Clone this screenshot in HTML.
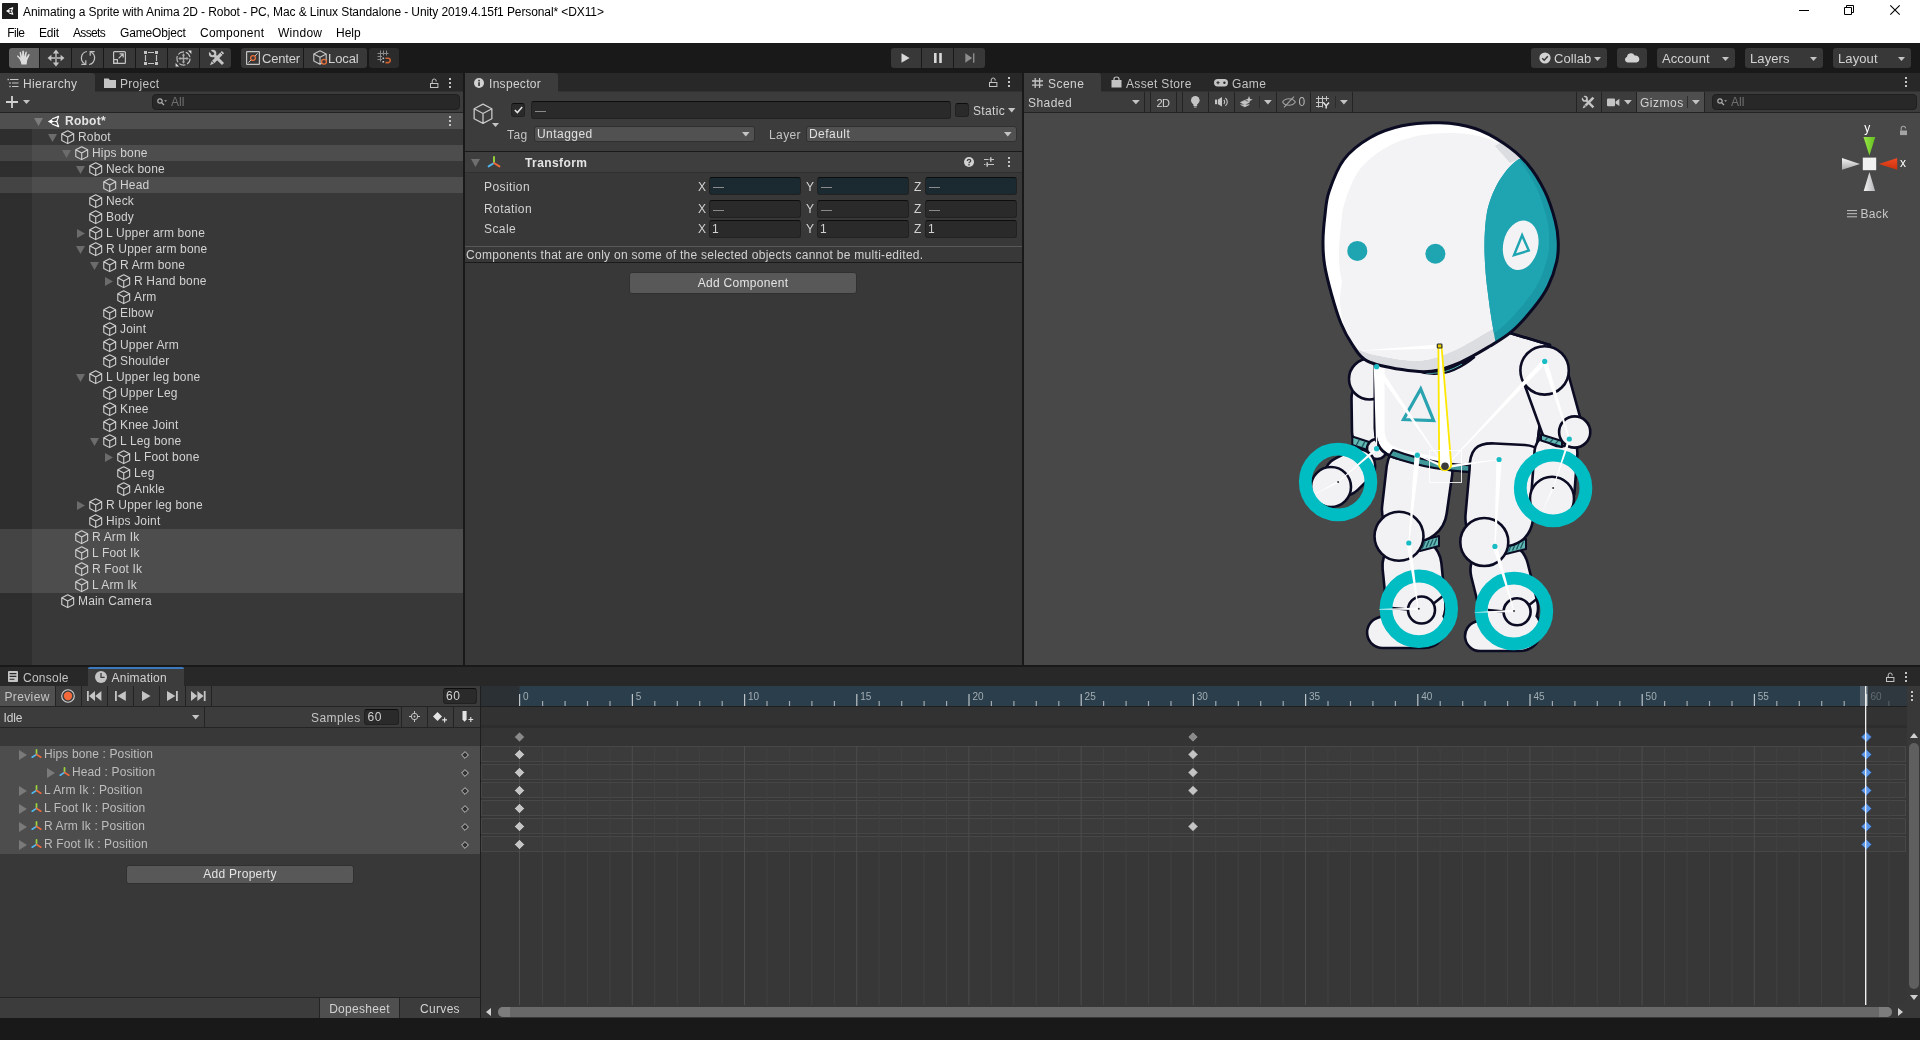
<!DOCTYPE html><html><head><meta charset="utf-8"><title>Unity</title><style>
*{box-sizing:border-box;margin:0;padding:0}
html,body{width:1920px;height:1040px;overflow:hidden;background:#191919;}
body{font-family:"Liberation Sans",sans-serif;font-size:12px;color:#c8c8c8;position:relative;line-height:16px;-webkit-font-smoothing:antialiased}
.a{position:absolute}
.t{position:absolute;white-space:nowrap;line-height:16px;height:16px}
.fld{position:absolute;background:#2a2a2a;border:1px solid #212121;border-top-color:#0d0d0d;border-radius:3px}
.btn{position:absolute;background:#585858;border:1px solid #303030;border-radius:3px;color:#e4e4e4;text-align:center}
.dd{position:absolute;background:#515151;border:1px solid #303030;border-radius:3px}
.sep{position:absolute;background:#232323;width:1px}
.tb{position:absolute;background:#383838;border-radius:2px}
svg{position:absolute;overflow:visible}
</style></head><body><div id="root" style="position:absolute;left:0;top:0;width:1920px;height:1040px;will-change:transform">
<div class="a" style="left:0px;top:0px;width:1920px;height:43px;background:#ffffff;"></div>
<svg style="left:2px;top:3px;" width="16" height="16" viewBox="0 0 16 16"><rect width="16" height="16" rx="0.5" fill="#1c1c1c"/><g transform="translate(2.6,2.8) scale(0.65)"><path d="M2.2 8L7 5V7L9.4 8L7 9V11Z" fill="#fff"/><path d="M7 5L12.6 3L10.8 8L12.6 13L7 11M9.4 8H10.8" fill="none" stroke="#fff" stroke-width="1.6" stroke-linejoin="round"/></g></svg>
<div class="t" style="left:23px;top:4px;color:#000;font-size:12px;letter-spacing:-0.1px">Animating a Sprite with Anima 2D - Robot - PC, Mac &amp; Linux Standalone - Unity 2019.4.15f1 Personal* &lt;DX11&gt;</div>
<div class="t" style="left:7.3px;top:25px;color:#000;font-size:12px;letter-spacing:-0.545px;">File</div>
<div class="t" style="left:39px;top:25px;color:#000;font-size:12px;letter-spacing:-0.226px;">Edit</div>
<div class="t" style="left:73px;top:25px;color:#000;font-size:12px;letter-spacing:-0.642px;">Assets</div>
<div class="t" style="left:120px;top:25px;color:#000;font-size:12px;letter-spacing:-0.173px;">GameObject</div>
<div class="t" style="left:200px;top:25px;color:#000;font-size:12px;letter-spacing:0.245px;">Component</div>
<div class="t" style="left:278px;top:25px;color:#000;font-size:12px;letter-spacing:0.264px;">Window</div>
<div class="t" style="left:336px;top:25px;color:#000;font-size:12px;letter-spacing:0.007px;">Help</div>
<svg style="left:1799px;top:10px;" width="10" height="1" viewBox="0 0 10 1"><rect width="10" height="1" fill="#000"/></svg>
<svg style="left:1844px;top:5px;" width="10" height="10" viewBox="0 0 10 10"><path d="M0.5 2.5H7.5V9.5H0.5Z M2.5 2.5V0.5H9.5V7.5H7.5" fill="none" stroke="#000" stroke-width="1"/></svg>
<svg style="left:1890px;top:5px;" width="10" height="10" viewBox="0 0 10 10"><path d="M0.3 0.3L9.7 9.7M9.7 0.3L0.3 9.7" stroke="#000" stroke-width="1.1"/></svg>
<div class="a" style="left:0px;top:43px;width:1920px;height:30px;background:#191919;"></div>
<div class="a" style="left:9px;top:48px;width:30px;height:20px;background:#656565;border-radius:3px 0 0 3px"></div>
<div class="a" style="left:40px;top:48px;width:31px;height:20px;background:#383838;border-radius:0"></div>
<div class="a" style="left:72px;top:48px;width:31px;height:20px;background:#383838;border-radius:0"></div>
<div class="a" style="left:104px;top:48px;width:31px;height:20px;background:#383838;border-radius:0"></div>
<div class="a" style="left:136px;top:48px;width:31px;height:20px;background:#383838;border-radius:0"></div>
<div class="a" style="left:168px;top:48px;width:31px;height:20px;background:#383838;border-radius:0"></div>
<div class="a" style="left:200px;top:48px;width:31px;height:20px;background:#383838;border-radius:0 3px 3px 0"></div>
<svg style="left:16px;top:50px;" width="16" height="16" viewBox="0 0 16 16"><path d="M3.6 9.2L1.2 6.6C0.6 5.9 1.5 5.1 2.2 5.7L4.4 7.8L3.6 2.6C3.5 1.6 4.8 1.4 5 2.4L6 6.6L6.3 1.3C6.4 0.3 7.8 0.3 7.9 1.3L8.2 6.6L9.4 2.2C9.7 1.2 11 1.5 10.8 2.5L10 7.4L12.3 4.4C12.9 3.6 14 4.4 13.5 5.2L11.2 10.2L10.6 14.4H5.4L4.9 12Z" fill="#dcdcdc"/></svg>
<svg style="left:47px;top:49px;" width="18" height="18" viewBox="0 0 18 18"><path d="M9 2V16M2 9H16" stroke="#a0a0a0" stroke-width="1.8"/><path d="M9 0.6L12.2 4.4H5.8Z M9 17.4L12.2 13.6H5.8Z M0.6 9L4.4 5.8V12.2Z M17.4 9L13.6 5.8V12.2Z" fill="#c4c4c4"/></svg>
<svg style="left:80px;top:50px;" width="16" height="16" viewBox="0 0 16 16"><path d="M6.85 1.5A6.6 6.6 0 0 0 4.7 13.7" fill="none" stroke="#c4c4c4" stroke-width="1.2"/><path d="M1.4 14.4H5.8V10.2" fill="none" stroke="#c4c4c4" stroke-width="1.2"/><path d="M9.15 14.5A6.6 6.6 0 0 0 11.3 2.3" fill="none" stroke="#c4c4c4" stroke-width="1.2"/><path d="M14.6 1.6H10.2V5.8" fill="none" stroke="#c4c4c4" stroke-width="1.2"/></svg>
<svg style="left:113px;top:51px;" width="14" height="14" viewBox="0 0 14 14"><rect x="0.6" y="0.6" width="11.8" height="11.8" rx="1" fill="none" stroke="#c4c4c4" stroke-width="1.2"/><rect x="0.6" y="8.6" width="3.8" height="3.8" fill="none" stroke="#c4c4c4" stroke-width="1.2"/><path d="M5.6 7.4L10 3M6.6 2.8H10.2V6.4" fill="none" stroke="#c4c4c4" stroke-width="1.2"/></svg>
<svg style="left:144px;top:51px;" width="15" height="15" viewBox="0 0 15 15"><path d="M4 1.5H10M4 12.5H10M1.5 4V10M12.5 4V10" stroke="#c4c4c4" stroke-width="1.2"/><rect x="0" y="0" width="3" height="3" fill="#c4c4c4"/><rect x="11" y="0" width="3" height="3" fill="#c4c4c4"/><rect x="0" y="11" width="3" height="3" fill="#c4c4c4"/><rect x="11" y="11" width="3" height="3" fill="#c4c4c4"/></svg>
<svg style="left:175px;top:50px;" width="17" height="17" viewBox="0 0 17 17"><circle cx="8.5" cy="8.5" r="6.6" fill="none" stroke="#c4c4c4" stroke-width="1.1" stroke-dasharray="6.5 1.8"/><path d="M8.5 3.2L10.2 5.4H9.2V7.8H11.6V6.8L13.8 8.5L11.6 10.2V9.2H9.2V11.6H10.2L8.5 13.8L6.8 11.6H7.8V9.2H5.4V10.2L3.2 8.5L5.4 6.8V7.8H7.8V5.4H6.8Z" fill="#a9a9a9"/><path d="M13 0.6H16.4V4Z M4 16.4H0.6V13Z" fill="#dcdcdc"/></svg>
<svg style="left:208px;top:49px;" width="17" height="17" viewBox="0 0 17 17"><path d="M6.4 6.4L15 15" stroke="#c4c4c4" stroke-width="3"/><circle cx="4.6" cy="4.6" r="2.7" fill="none" stroke="#c4c4c4" stroke-width="2.1"/><path d="M4.6 4.6L0.8 0.8" stroke="#383838" stroke-width="2.4"/><path d="M15 3.2L5.2 13" stroke="#c4c4c4" stroke-width="3.2"/><path d="M3.6 12.2L6 14.6L2 16.2Z" fill="#c4c4c4"/><path d="M12.4 3.4L14.8 5.8" stroke="#383838" stroke-width="0.9"/></svg>
<div class="a" style="left:241px;top:48px;width:62px;height:20px;background:#383838;border-radius:3px 0 0 3px"></div>
<div class="a" style="left:304px;top:48px;width:63px;height:20px;background:#383838;border-radius:0 3px 3px 0"></div>
<div class="a" style="left:369px;top:48px;width:30px;height:20px;background:#2b2b2b;border-radius:3px"></div>
<svg style="left:246px;top:51px;" width="14" height="14" viewBox="0 0 14 14"><rect x="0.6" y="0.6" width="12.8" height="12.8" rx="0.5" fill="none" stroke="#c4c4c4" stroke-width="1.2"/><path d="M2.4 11.6L11.6 2.4" stroke="#c4c4c4" stroke-width="1"/><circle cx="7" cy="7" r="2.4" fill="#383838" stroke="#e8703a" stroke-width="1.3"/></svg>
<div class="t" style="left:262px;top:51px;color:#d2d2d2;font-size:13px;letter-spacing:-0.2px">Center</div>
<svg style="left:313px;top:50px;" width="15" height="16" viewBox="0 0 15 16"><path d="M7 0.8L13.2 4V11L7 14.2L0.8 11V4Z M0.8 4L7 7.3L13.2 4 M7 7.3V14.2" fill="none" stroke="#c4c4c4" stroke-width="1.15" stroke-linejoin="round"/><circle cx="11" cy="11.8" r="2.4" fill="#383838" stroke="#e8703a" stroke-width="1.3"/></svg>
<div class="t" style="left:328px;top:51px;color:#d2d2d2;font-size:13px;letter-spacing:-0.1px">Local</div>
<svg style="left:377px;top:50px;" width="15" height="16" viewBox="0 0 15 16"><path d="M3.5 0.5V11.5M6.5 0.5V5.5M9.5 0.5V5.5M0.5 3.5H11.5M0.5 6.5H5M0.5 9.5H5" stroke="#8a8a8a" stroke-width="1"/><rect x="5.5" y="7.5" width="1.6" height="1.6" fill="#c4c4c4"/><rect x="5.5" y="11" width="1.6" height="1.6" fill="#c4c4c4"/><path d="M8.5 8.2H11A2.2 2.2 0 0 1 11 12.6H8.5" fill="none" stroke="#d0622f" stroke-width="1.6"/></svg>
<div class="a" style="left:891px;top:48px;width:30px;height:20px;background:#383838;border-radius:3px 0 0 3px"></div>
<div class="a" style="left:922px;top:48px;width:31px;height:20px;background:#383838;"></div>
<div class="a" style="left:954px;top:48px;width:31px;height:20px;background:#383838;border-radius:0 3px 3px 0"></div>
<svg style="left:901px;top:53px;" width="9" height="10" viewBox="0 0 9 10"><path d="M0.5 0.3V9.7L8.6 5Z" fill="#d8d8d8"/></svg>
<svg style="left:934px;top:53px;" width="8" height="10" viewBox="0 0 8 10"><rect x="0" y="0" width="2.6" height="10" fill="#d8d8d8"/><rect x="5.2" y="0" width="2.6" height="10" fill="#d8d8d8"/></svg>
<svg style="left:965px;top:53px;" width="10" height="10" viewBox="0 0 10 10"><path d="M0.3 0.3V9.7L7.2 5Z" fill="#8d8d8d"/><rect x="8" y="0.3" width="1.4" height="9.4" fill="#8d8d8d"/></svg>
<div class="a" style="left:1531px;top:48px;width:76px;height:20px;background:#383838;border-radius:3px"></div>
<svg style="left:1539px;top:52px;" width="12" height="12" viewBox="0 0 12 12"><circle cx="6" cy="6" r="5.6" fill="#d2d2d2"/><path d="M3.2 6.2L5.2 8.2L8.8 4.2" fill="none" stroke="#383838" stroke-width="1.5"/></svg>
<div class="t" style="left:1554px;top:51px;color:#d2d2d2;font-size:13px;letter-spacing:0.1px">Collab</div>
<svg style="left:1594.0px;top:56.5px;" width="7" height="4" viewBox="0 0 7 4"><path d="M0 0H7L3.5 4Z" fill="#c4c4c4"/></svg>
<div class="a" style="left:1617px;top:48px;width:30px;height:20px;background:#383838;border-radius:3px"></div>
<svg style="left:1624px;top:53px;" width="16" height="10" viewBox="0 0 16 10"><path d="M3.4 9.6A3 3 0 0 1 3 3.8A4 4 0 0 1 10.6 2.6A3.4 3.4 0 0 1 12.6 9.6Z" fill="#d2d2d2"/></svg>
<div class="a" style="left:1657px;top:48px;width:78px;height:20px;background:#383838;border-radius:3px"></div>
<div class="t" style="left:1662px;top:51px;color:#d2d2d2;font-size:13px;letter-spacing:0.1px">Account</div>
<svg style="left:1722.0px;top:56.5px;" width="7" height="4" viewBox="0 0 7 4"><path d="M0 0H7L3.5 4Z" fill="#c4c4c4"/></svg>
<div class="a" style="left:1745px;top:48px;width:78px;height:20px;background:#383838;border-radius:3px"></div>
<div class="t" style="left:1750px;top:51px;color:#d2d2d2;font-size:13px;letter-spacing:0.1px">Layers</div>
<svg style="left:1810.0px;top:56.5px;" width="7" height="4" viewBox="0 0 7 4"><path d="M0 0H7L3.5 4Z" fill="#c4c4c4"/></svg>
<div class="a" style="left:1833px;top:48px;width:78px;height:20px;background:#383838;border-radius:3px"></div>
<div class="t" style="left:1838px;top:51px;color:#d2d2d2;font-size:13px;letter-spacing:0.1px">Layout</div>
<svg style="left:1898.0px;top:56.5px;" width="7" height="4" viewBox="0 0 7 4"><path d="M0 0H7L3.5 4Z" fill="#c4c4c4"/></svg>
<div class="a" style="left:0px;top:73px;width:463px;height:592px;background:#383838;"></div>
<div class="a" style="left:0px;top:73px;width:463px;height:18px;background:#282828;"></div>
<div class="a" style="left:0px;top:91px;width:463px;height:1px;background:#323232;"></div>
<div class="a" style="left:0px;top:73px;width:95px;height:19px;background:#3c3c3c;border-radius:0 3px 0 0"></div>
<svg style="left:7px;top:78px;" width="12" height="10" viewBox="0 0 12 10"><path d="M3 1.5H11.5M5 5H11.5M5 8.5H11.5" stroke="#c4c4c4" stroke-width="1.2"/><rect x="0.5" y="0.8" width="1.4" height="1.4" fill="#c4c4c4"/><rect x="2.3" y="4.3" width="1.4" height="1.4" fill="#c4c4c4"/><rect x="2.3" y="7.8" width="1.4" height="1.4" fill="#c4c4c4"/></svg>
<div class="t" style="left:23px;top:76px;color:#d2d2d2;font-size:12px;letter-spacing:0.33px">Hierarchy</div>
<svg style="left:104px;top:78px;" width="12" height="10" viewBox="0 0 12 10"><path d="M0 0.5H4.6L5.8 2H12V10H0Z" fill="#c4c4c4"/></svg>
<div class="t" style="left:120px;top:76px;color:#c4c4c4;font-size:12px;letter-spacing:0.3px">Project</div>
<svg style="left:430px;top:78px;" width="9" height="10" viewBox="0 0 9 10"><rect x="0.5" y="5.5" width="7.4" height="4" fill="none" stroke="#c4c4c4"/><path d="M2.2 5.5V3a2 2 0 0 1 4 0v0.6" fill="none" stroke="#c4c4c4"/></svg>
<svg style="left:449px;top:78px;" width="2" height="10" viewBox="0 0 2 10"><rect x="0" y="0" width="2" height="2" fill="#c4c4c4"/><rect x="0" y="4" width="2" height="2" fill="#c4c4c4"/><rect x="0" y="8" width="2" height="2" fill="#c4c4c4"/></svg>
<div class="a" style="left:0px;top:92px;width:463px;height:20px;background:#3c3c3c;"></div>
<div class="a" style="left:0px;top:112px;width:463px;height:1px;background:#232323;"></div>
<svg style="left:6px;top:96px;" width="12" height="12" viewBox="0 0 12 12"><path d="M6 0V12M0 6H12" stroke="#d2d2d2" stroke-width="1.8"/></svg>
<svg style="left:23.0px;top:99.5px;" width="7" height="4" viewBox="0 0 7 4"><path d="M0 0H7L3.5 4Z" fill="#c4c4c4"/></svg>
<div class="a" style="left:152px;top:94px;width:308px;height:16px;background:#282828;border:1px solid #1f1f1f;border-radius:4px"></div>
<svg style="left:157px;top:98px;" width="10" height="8" viewBox="0 0 10 8"><circle cx="3" cy="3" r="2.2" fill="none" stroke="#b0b0b0" stroke-width="1.2"/><path d="M4.6 4.6L7 7" stroke="#b0b0b0" stroke-width="1.3"/><path d="M7.2 2.2H10L8.6 3.8Z" fill="#b0b0b0"/></svg>
<div class="t" style="left:171px;top:94px;color:#717171;font-size:12px;">All</div>
<div class="a" style="left:0px;top:129px;width:32px;height:536px;background:#2e2e2e;"></div>
<div class="a" style="left:0px;top:113px;width:463px;height:16px;background:#4f4f4f;"></div>
<svg style="left:34.0px;top:117.8px;" width="9" height="8" viewBox="0 0 9 8"><path d="M0 0H9L4.5 8Z" fill="#7c7c7c"/></svg>
<svg style="left:47px;top:115px;" width="13" height="13" viewBox="0 0 13 13"><path d="M0.8 6.5L5 4V5.4L7.4 6.5L5 7.6V9Z" fill="#fff"/><path d="M5 4L11.6 1.4L9.8 6.5L11.6 11.6L5 9M7.4 6.5H9.8" fill="none" stroke="#fff" stroke-width="1.2" stroke-linejoin="round"/></svg>
<div class="t" style="left:65px;top:113px;color:#e4e4e4;font-size:12px;font-weight:bold;letter-spacing:0.25px">Robot*</div>
<svg style="left:449px;top:116px;" width="2" height="10" viewBox="0 0 2 10"><rect x="0" y="0" width="2" height="2" fill="#c4c4c4"/><rect x="0" y="4" width="2" height="2" fill="#c4c4c4"/><rect x="0" y="8" width="2" height="2" fill="#c4c4c4"/></svg>
<svg style="left:48.0px;top:133.8px;" width="9" height="8" viewBox="0 0 9 8"><path d="M0 0H9L4.5 8Z" fill="#6c6c6c"/></svg>
<svg style="left:61px;top:129.6px;" width="13.44" height="14.399999999999999" viewBox="0 0 14 15"><path d="M7 0.8L13.2 4V11L7 14.2L0.8 11V4Z M0.8 4L7 7.3L13.2 4 M7 7.3V14.2" fill="none" stroke="#d0d0d0" stroke-width="1.15" stroke-linejoin="round"/></svg>
<div class="t" style="left:78px;top:129px;color:#d2d2d2;font-size:12px;letter-spacing:0.17px">Robot</div>
<div class="a" style="left:0px;top:145px;width:463px;height:16px;background:#4d4d4d;"></div>
<div class="a" style="left:0px;top:145px;width:32px;height:16px;background:#444444;"></div>
<svg style="left:62.0px;top:149.8px;" width="9" height="8" viewBox="0 0 9 8"><path d="M0 0H9L4.5 8Z" fill="#6c6c6c"/></svg>
<svg style="left:75px;top:145.6px;" width="13.44" height="14.399999999999999" viewBox="0 0 14 15"><path d="M7 0.8L13.2 4V11L7 14.2L0.8 11V4Z M0.8 4L7 7.3L13.2 4 M7 7.3V14.2" fill="none" stroke="#d0d0d0" stroke-width="1.15" stroke-linejoin="round"/></svg>
<div class="t" style="left:92px;top:145px;color:#d2d2d2;font-size:12px;letter-spacing:0.17px">Hips bone</div>
<svg style="left:76.0px;top:165.8px;" width="9" height="8" viewBox="0 0 9 8"><path d="M0 0H9L4.5 8Z" fill="#6c6c6c"/></svg>
<svg style="left:89px;top:161.6px;" width="13.44" height="14.399999999999999" viewBox="0 0 14 15"><path d="M7 0.8L13.2 4V11L7 14.2L0.8 11V4Z M0.8 4L7 7.3L13.2 4 M7 7.3V14.2" fill="none" stroke="#d0d0d0" stroke-width="1.15" stroke-linejoin="round"/></svg>
<div class="t" style="left:106px;top:161px;color:#d2d2d2;font-size:12px;letter-spacing:0.17px">Neck bone</div>
<div class="a" style="left:0px;top:177px;width:463px;height:16px;background:#4d4d4d;"></div>
<div class="a" style="left:0px;top:177px;width:32px;height:16px;background:#444444;"></div>
<svg style="left:103px;top:177.6px;" width="13.44" height="14.399999999999999" viewBox="0 0 14 15"><path d="M7 0.8L13.2 4V11L7 14.2L0.8 11V4Z M0.8 4L7 7.3L13.2 4 M7 7.3V14.2" fill="none" stroke="#d0d0d0" stroke-width="1.15" stroke-linejoin="round"/></svg>
<div class="t" style="left:120px;top:177px;color:#d2d2d2;font-size:12px;letter-spacing:0.17px">Head</div>
<svg style="left:89px;top:193.6px;" width="13.44" height="14.399999999999999" viewBox="0 0 14 15"><path d="M7 0.8L13.2 4V11L7 14.2L0.8 11V4Z M0.8 4L7 7.3L13.2 4 M7 7.3V14.2" fill="none" stroke="#d0d0d0" stroke-width="1.15" stroke-linejoin="round"/></svg>
<div class="t" style="left:106px;top:193px;color:#d2d2d2;font-size:12px;letter-spacing:0.17px">Neck</div>
<svg style="left:89px;top:209.6px;" width="13.44" height="14.399999999999999" viewBox="0 0 14 15"><path d="M7 0.8L13.2 4V11L7 14.2L0.8 11V4Z M0.8 4L7 7.3L13.2 4 M7 7.3V14.2" fill="none" stroke="#d0d0d0" stroke-width="1.15" stroke-linejoin="round"/></svg>
<div class="t" style="left:106px;top:209px;color:#d2d2d2;font-size:12px;letter-spacing:0.17px">Body</div>
<svg style="left:77.0px;top:229.0px;" width="8" height="9" viewBox="0 0 8 9"><path d="M0 0V9L8 4.5Z" fill="#6c6c6c"/></svg>
<svg style="left:89px;top:225.6px;" width="13.44" height="14.399999999999999" viewBox="0 0 14 15"><path d="M7 0.8L13.2 4V11L7 14.2L0.8 11V4Z M0.8 4L7 7.3L13.2 4 M7 7.3V14.2" fill="none" stroke="#d0d0d0" stroke-width="1.15" stroke-linejoin="round"/></svg>
<div class="t" style="left:106px;top:225px;color:#d2d2d2;font-size:12px;letter-spacing:0.17px">L Upper arm bone</div>
<svg style="left:76.0px;top:245.8px;" width="9" height="8" viewBox="0 0 9 8"><path d="M0 0H9L4.5 8Z" fill="#6c6c6c"/></svg>
<svg style="left:89px;top:241.6px;" width="13.44" height="14.399999999999999" viewBox="0 0 14 15"><path d="M7 0.8L13.2 4V11L7 14.2L0.8 11V4Z M0.8 4L7 7.3L13.2 4 M7 7.3V14.2" fill="none" stroke="#d0d0d0" stroke-width="1.15" stroke-linejoin="round"/></svg>
<div class="t" style="left:106px;top:241px;color:#d2d2d2;font-size:12px;letter-spacing:0.17px">R Upper arm bone</div>
<svg style="left:90.0px;top:261.8px;" width="9" height="8" viewBox="0 0 9 8"><path d="M0 0H9L4.5 8Z" fill="#6c6c6c"/></svg>
<svg style="left:103px;top:257.6px;" width="13.44" height="14.399999999999999" viewBox="0 0 14 15"><path d="M7 0.8L13.2 4V11L7 14.2L0.8 11V4Z M0.8 4L7 7.3L13.2 4 M7 7.3V14.2" fill="none" stroke="#d0d0d0" stroke-width="1.15" stroke-linejoin="round"/></svg>
<div class="t" style="left:120px;top:257px;color:#d2d2d2;font-size:12px;letter-spacing:0.17px">R Arm bone</div>
<svg style="left:105.0px;top:277.0px;" width="8" height="9" viewBox="0 0 8 9"><path d="M0 0V9L8 4.5Z" fill="#6c6c6c"/></svg>
<svg style="left:117px;top:273.6px;" width="13.44" height="14.399999999999999" viewBox="0 0 14 15"><path d="M7 0.8L13.2 4V11L7 14.2L0.8 11V4Z M0.8 4L7 7.3L13.2 4 M7 7.3V14.2" fill="none" stroke="#d0d0d0" stroke-width="1.15" stroke-linejoin="round"/></svg>
<div class="t" style="left:134px;top:273px;color:#d2d2d2;font-size:12px;letter-spacing:0.17px">R Hand bone</div>
<svg style="left:117px;top:289.6px;" width="13.44" height="14.399999999999999" viewBox="0 0 14 15"><path d="M7 0.8L13.2 4V11L7 14.2L0.8 11V4Z M0.8 4L7 7.3L13.2 4 M7 7.3V14.2" fill="none" stroke="#d0d0d0" stroke-width="1.15" stroke-linejoin="round"/></svg>
<div class="t" style="left:134px;top:289px;color:#d2d2d2;font-size:12px;letter-spacing:0.17px">Arm</div>
<svg style="left:103px;top:305.6px;" width="13.44" height="14.399999999999999" viewBox="0 0 14 15"><path d="M7 0.8L13.2 4V11L7 14.2L0.8 11V4Z M0.8 4L7 7.3L13.2 4 M7 7.3V14.2" fill="none" stroke="#d0d0d0" stroke-width="1.15" stroke-linejoin="round"/></svg>
<div class="t" style="left:120px;top:305px;color:#d2d2d2;font-size:12px;letter-spacing:0.17px">Elbow</div>
<svg style="left:103px;top:321.6px;" width="13.44" height="14.399999999999999" viewBox="0 0 14 15"><path d="M7 0.8L13.2 4V11L7 14.2L0.8 11V4Z M0.8 4L7 7.3L13.2 4 M7 7.3V14.2" fill="none" stroke="#d0d0d0" stroke-width="1.15" stroke-linejoin="round"/></svg>
<div class="t" style="left:120px;top:321px;color:#d2d2d2;font-size:12px;letter-spacing:0.17px">Joint</div>
<svg style="left:103px;top:337.6px;" width="13.44" height="14.399999999999999" viewBox="0 0 14 15"><path d="M7 0.8L13.2 4V11L7 14.2L0.8 11V4Z M0.8 4L7 7.3L13.2 4 M7 7.3V14.2" fill="none" stroke="#d0d0d0" stroke-width="1.15" stroke-linejoin="round"/></svg>
<div class="t" style="left:120px;top:337px;color:#d2d2d2;font-size:12px;letter-spacing:0.17px">Upper Arm</div>
<svg style="left:103px;top:353.6px;" width="13.44" height="14.399999999999999" viewBox="0 0 14 15"><path d="M7 0.8L13.2 4V11L7 14.2L0.8 11V4Z M0.8 4L7 7.3L13.2 4 M7 7.3V14.2" fill="none" stroke="#d0d0d0" stroke-width="1.15" stroke-linejoin="round"/></svg>
<div class="t" style="left:120px;top:353px;color:#d2d2d2;font-size:12px;letter-spacing:0.17px">Shoulder</div>
<svg style="left:76.0px;top:373.8px;" width="9" height="8" viewBox="0 0 9 8"><path d="M0 0H9L4.5 8Z" fill="#6c6c6c"/></svg>
<svg style="left:89px;top:369.6px;" width="13.44" height="14.399999999999999" viewBox="0 0 14 15"><path d="M7 0.8L13.2 4V11L7 14.2L0.8 11V4Z M0.8 4L7 7.3L13.2 4 M7 7.3V14.2" fill="none" stroke="#d0d0d0" stroke-width="1.15" stroke-linejoin="round"/></svg>
<div class="t" style="left:106px;top:369px;color:#d2d2d2;font-size:12px;letter-spacing:0.17px">L Upper leg bone</div>
<svg style="left:103px;top:385.6px;" width="13.44" height="14.399999999999999" viewBox="0 0 14 15"><path d="M7 0.8L13.2 4V11L7 14.2L0.8 11V4Z M0.8 4L7 7.3L13.2 4 M7 7.3V14.2" fill="none" stroke="#d0d0d0" stroke-width="1.15" stroke-linejoin="round"/></svg>
<div class="t" style="left:120px;top:385px;color:#d2d2d2;font-size:12px;letter-spacing:0.17px">Upper Leg</div>
<svg style="left:103px;top:401.6px;" width="13.44" height="14.399999999999999" viewBox="0 0 14 15"><path d="M7 0.8L13.2 4V11L7 14.2L0.8 11V4Z M0.8 4L7 7.3L13.2 4 M7 7.3V14.2" fill="none" stroke="#d0d0d0" stroke-width="1.15" stroke-linejoin="round"/></svg>
<div class="t" style="left:120px;top:401px;color:#d2d2d2;font-size:12px;letter-spacing:0.17px">Knee</div>
<svg style="left:103px;top:417.6px;" width="13.44" height="14.399999999999999" viewBox="0 0 14 15"><path d="M7 0.8L13.2 4V11L7 14.2L0.8 11V4Z M0.8 4L7 7.3L13.2 4 M7 7.3V14.2" fill="none" stroke="#d0d0d0" stroke-width="1.15" stroke-linejoin="round"/></svg>
<div class="t" style="left:120px;top:417px;color:#d2d2d2;font-size:12px;letter-spacing:0.17px">Knee Joint</div>
<svg style="left:90.0px;top:437.8px;" width="9" height="8" viewBox="0 0 9 8"><path d="M0 0H9L4.5 8Z" fill="#6c6c6c"/></svg>
<svg style="left:103px;top:433.6px;" width="13.44" height="14.399999999999999" viewBox="0 0 14 15"><path d="M7 0.8L13.2 4V11L7 14.2L0.8 11V4Z M0.8 4L7 7.3L13.2 4 M7 7.3V14.2" fill="none" stroke="#d0d0d0" stroke-width="1.15" stroke-linejoin="round"/></svg>
<div class="t" style="left:120px;top:433px;color:#d2d2d2;font-size:12px;letter-spacing:0.17px">L Leg bone</div>
<svg style="left:105.0px;top:453.0px;" width="8" height="9" viewBox="0 0 8 9"><path d="M0 0V9L8 4.5Z" fill="#6c6c6c"/></svg>
<svg style="left:117px;top:449.6px;" width="13.44" height="14.399999999999999" viewBox="0 0 14 15"><path d="M7 0.8L13.2 4V11L7 14.2L0.8 11V4Z M0.8 4L7 7.3L13.2 4 M7 7.3V14.2" fill="none" stroke="#d0d0d0" stroke-width="1.15" stroke-linejoin="round"/></svg>
<div class="t" style="left:134px;top:449px;color:#d2d2d2;font-size:12px;letter-spacing:0.17px">L Foot bone</div>
<svg style="left:117px;top:465.6px;" width="13.44" height="14.399999999999999" viewBox="0 0 14 15"><path d="M7 0.8L13.2 4V11L7 14.2L0.8 11V4Z M0.8 4L7 7.3L13.2 4 M7 7.3V14.2" fill="none" stroke="#d0d0d0" stroke-width="1.15" stroke-linejoin="round"/></svg>
<div class="t" style="left:134px;top:465px;color:#d2d2d2;font-size:12px;letter-spacing:0.17px">Leg</div>
<svg style="left:117px;top:481.6px;" width="13.44" height="14.399999999999999" viewBox="0 0 14 15"><path d="M7 0.8L13.2 4V11L7 14.2L0.8 11V4Z M0.8 4L7 7.3L13.2 4 M7 7.3V14.2" fill="none" stroke="#d0d0d0" stroke-width="1.15" stroke-linejoin="round"/></svg>
<div class="t" style="left:134px;top:481px;color:#d2d2d2;font-size:12px;letter-spacing:0.17px">Ankle</div>
<svg style="left:77.0px;top:501.0px;" width="8" height="9" viewBox="0 0 8 9"><path d="M0 0V9L8 4.5Z" fill="#6c6c6c"/></svg>
<svg style="left:89px;top:497.6px;" width="13.44" height="14.399999999999999" viewBox="0 0 14 15"><path d="M7 0.8L13.2 4V11L7 14.2L0.8 11V4Z M0.8 4L7 7.3L13.2 4 M7 7.3V14.2" fill="none" stroke="#d0d0d0" stroke-width="1.15" stroke-linejoin="round"/></svg>
<div class="t" style="left:106px;top:497px;color:#d2d2d2;font-size:12px;letter-spacing:0.17px">R Upper leg bone</div>
<svg style="left:89px;top:513.6px;" width="13.44" height="14.399999999999999" viewBox="0 0 14 15"><path d="M7 0.8L13.2 4V11L7 14.2L0.8 11V4Z M0.8 4L7 7.3L13.2 4 M7 7.3V14.2" fill="none" stroke="#d0d0d0" stroke-width="1.15" stroke-linejoin="round"/></svg>
<div class="t" style="left:106px;top:513px;color:#d2d2d2;font-size:12px;letter-spacing:0.17px">Hips Joint</div>
<div class="a" style="left:0px;top:529px;width:463px;height:16px;background:#4d4d4d;"></div>
<div class="a" style="left:0px;top:529px;width:32px;height:16px;background:#444444;"></div>
<svg style="left:75px;top:529.6px;" width="13.44" height="14.399999999999999" viewBox="0 0 14 15"><path d="M7 0.8L13.2 4V11L7 14.2L0.8 11V4Z M0.8 4L7 7.3L13.2 4 M7 7.3V14.2" fill="none" stroke="#d0d0d0" stroke-width="1.15" stroke-linejoin="round"/></svg>
<div class="t" style="left:92px;top:529px;color:#d2d2d2;font-size:12px;letter-spacing:0.17px">R Arm Ik</div>
<div class="a" style="left:0px;top:545px;width:463px;height:16px;background:#4d4d4d;"></div>
<div class="a" style="left:0px;top:545px;width:32px;height:16px;background:#444444;"></div>
<svg style="left:75px;top:545.6px;" width="13.44" height="14.399999999999999" viewBox="0 0 14 15"><path d="M7 0.8L13.2 4V11L7 14.2L0.8 11V4Z M0.8 4L7 7.3L13.2 4 M7 7.3V14.2" fill="none" stroke="#d0d0d0" stroke-width="1.15" stroke-linejoin="round"/></svg>
<div class="t" style="left:92px;top:545px;color:#d2d2d2;font-size:12px;letter-spacing:0.17px">L Foot Ik</div>
<div class="a" style="left:0px;top:561px;width:463px;height:16px;background:#4d4d4d;"></div>
<div class="a" style="left:0px;top:561px;width:32px;height:16px;background:#444444;"></div>
<svg style="left:75px;top:561.6px;" width="13.44" height="14.399999999999999" viewBox="0 0 14 15"><path d="M7 0.8L13.2 4V11L7 14.2L0.8 11V4Z M0.8 4L7 7.3L13.2 4 M7 7.3V14.2" fill="none" stroke="#d0d0d0" stroke-width="1.15" stroke-linejoin="round"/></svg>
<div class="t" style="left:92px;top:561px;color:#d2d2d2;font-size:12px;letter-spacing:0.17px">R Foot Ik</div>
<div class="a" style="left:0px;top:577px;width:463px;height:16px;background:#4d4d4d;"></div>
<div class="a" style="left:0px;top:577px;width:32px;height:16px;background:#444444;"></div>
<svg style="left:75px;top:577.6px;" width="13.44" height="14.399999999999999" viewBox="0 0 14 15"><path d="M7 0.8L13.2 4V11L7 14.2L0.8 11V4Z M0.8 4L7 7.3L13.2 4 M7 7.3V14.2" fill="none" stroke="#d0d0d0" stroke-width="1.15" stroke-linejoin="round"/></svg>
<div class="t" style="left:92px;top:577px;color:#d2d2d2;font-size:12px;letter-spacing:0.17px">L Arm Ik</div>
<svg style="left:61px;top:593.6px;" width="13.44" height="14.399999999999999" viewBox="0 0 14 15"><path d="M7 0.8L13.2 4V11L7 14.2L0.8 11V4Z M0.8 4L7 7.3L13.2 4 M7 7.3V14.2" fill="none" stroke="#d0d0d0" stroke-width="1.15" stroke-linejoin="round"/></svg>
<div class="t" style="left:78px;top:593px;color:#d2d2d2;font-size:12px;letter-spacing:0.17px">Main Camera</div>
<div class="a" style="left:465px;top:73px;width:557px;height:592px;background:#383838;"></div>
<div class="a" style="left:465px;top:73px;width:557px;height:18px;background:#282828;"></div>
<div class="a" style="left:465px;top:91px;width:557px;height:1px;background:#323232;"></div>
<div class="a" style="left:465px;top:73px;width:93px;height:19px;background:#3c3c3c;border-radius:0 3px 0 0"></div>
<svg style="left:474px;top:78px;" width="10" height="10" viewBox="0 0 10 10"><circle cx="5" cy="5" r="5" fill="#d2d2d2"/><rect x="4.2" y="4.2" width="1.7" height="3.8" fill="#3c3c3c"/><rect x="4.2" y="1.8" width="1.7" height="1.6" fill="#3c3c3c"/></svg>
<div class="t" style="left:489px;top:75.5px;color:#d2d2d2;font-size:12px;letter-spacing:0.3px">Inspector</div>
<svg style="left:989px;top:77px;" width="9" height="10" viewBox="0 0 9 10"><rect x="0.5" y="5.5" width="7.4" height="4" fill="none" stroke="#c4c4c4"/><path d="M2.2 5.5V3a2 2 0 0 1 4 0v0.6" fill="none" stroke="#c4c4c4"/></svg>
<svg style="left:1008px;top:77px;" width="2" height="10" viewBox="0 0 2 10"><rect x="0" y="0" width="2" height="2" fill="#c4c4c4"/><rect x="0" y="4" width="2" height="2" fill="#c4c4c4"/><rect x="0" y="8" width="2" height="2" fill="#c4c4c4"/></svg>
<div class="a" style="left:465px;top:92px;width:557px;height:59px;background:#3c3c3c;"></div>
<svg style="left:472.6px;top:102.6px;" width="20" height="21.5" viewBox="0 0 14 15"><path d="M7 0.8L13.2 4V11L7 14.2L0.8 11V4Z M0.8 4L7 7.3L13.2 4 M7 7.3V14.2" fill="none" stroke="#c8c8c8" stroke-width="0.9" stroke-linejoin="round"/></svg>
<svg style="left:491.5px;top:123.0px;" width="7" height="4" viewBox="0 0 7 4"><path d="M0 0H7L3.5 4Z" fill="#c4c4c4"/></svg>
<div class="fld" style="left:511px;top:103px;width:14px;height:14px"></div>
<svg style="left:513.5px;top:106px;" width="9" height="8" viewBox="0 0 9 8"><path d="M0.8 4L3.4 6.6L8.2 1" fill="none" stroke="#e4e4e4" stroke-width="1.5"/></svg>
<div class="fld" style="left:531px;top:101px;width:420px;height:18px"></div>
<div class="a" style="left:534.5px;top:110.5px;width:11px;height:1px;background:#8a8a8a;"></div>
<div class="fld" style="left:955px;top:103px;width:14px;height:14px"></div>
<div class="t" style="left:973px;top:102.5px;color:#d2d2d2;font-size:12px;letter-spacing:0.35px">Static</div>
<svg style="left:1008.3px;top:107.9px;" width="7.4" height="4.6" viewBox="0 0 7.4 4.6"><path d="M0 0H7.4L3.7 4.6Z" fill="#c4c4c4"/></svg>
<div class="t" style="left:507px;top:126.5px;color:#c4c4c4;font-size:12px;letter-spacing:0.4px">Tag</div>
<div class="dd" style="left:534px;top:126px;width:221px;height:16px"></div>
<div class="t" style="left:537px;top:126px;color:#e0e0e0;font-size:12px;letter-spacing:0.45px">Untagged</div>
<svg style="left:742.2px;top:132.20000000000002px;" width="7.6" height="4.4" viewBox="0 0 7.6 4.4"><path d="M0 0H7.6L3.8 4.4Z" fill="#c4c4c4"/></svg>
<div class="t" style="left:769px;top:126.5px;color:#c4c4c4;font-size:12px;letter-spacing:0.4px">Layer</div>
<div class="dd" style="left:806px;top:126px;width:211px;height:16px"></div>
<div class="t" style="left:809px;top:126px;color:#e0e0e0;font-size:12px;letter-spacing:0.45px">Default</div>
<svg style="left:1004.2px;top:132.20000000000002px;" width="7.6" height="4.4" viewBox="0 0 7.6 4.4"><path d="M0 0H7.6L3.8 4.4Z" fill="#c4c4c4"/></svg>
<div class="a" style="left:465px;top:151px;width:557px;height:1px;background:#1a1a1a;"></div>
<div class="a" style="left:465px;top:152px;width:557px;height:20px;background:#3e3e3e;"></div>
<div class="a" style="left:465px;top:172px;width:557px;height:1px;background:#303030;"></div>
<svg style="left:470.8px;top:159.0px;" width="9" height="8" viewBox="0 0 9 8"><path d="M0 0H9L4.5 8Z" fill="#6f6f6f"/></svg>
<svg style="left:486.5px;top:155.5px;" width="14" height="13" viewBox="0 0 14 13"><path d="M7 1V7" stroke="#9bd63c" stroke-width="1.9" stroke-linecap="round"/><path d="M7 7L1.6 10.4" stroke="#4fb8f0" stroke-width="1.9" stroke-linecap="round"/><path d="M7 7L12.4 10.4" stroke="#ee6a3a" stroke-width="1.9" stroke-linecap="round"/></svg>
<div class="t" style="left:525px;top:155px;color:#e4e4e4;font-size:12px;font-weight:bold;letter-spacing:0.42px">Transform</div>
<svg style="left:964px;top:157px;" width="10" height="10" viewBox="0 0 10 10"><circle cx="5" cy="5" r="5" fill="#d2d2d2"/><path d="M3.4 3.9C3.4 1.9 6.7 1.9 6.7 3.9C6.7 5 5 5 5 6.2" fill="none" stroke="#3e3e3e" stroke-width="1.3"/><rect x="4.3" y="7.1" width="1.4" height="1.4" fill="#3e3e3e"/></svg>
<svg style="left:984px;top:157px;" width="10" height="10" viewBox="0 0 10 10"><path d="M0 2.5H10M0 7.5H10" stroke="#c4c4c4" stroke-width="1.1"/><path d="M6.8 0.3V4.7M3.2 5.3V9.7" stroke="#c4c4c4" stroke-width="1.5"/><path d="M4.6 2.5H5.6M1.4 7.5H2.2" stroke="#3e3e3e" stroke-width="1.3"/></svg>
<svg style="left:1008px;top:157px;" width="2" height="10" viewBox="0 0 2 10"><rect x="0" y="0" width="2" height="2" fill="#c4c4c4"/><rect x="0" y="4" width="2" height="2" fill="#c4c4c4"/><rect x="0" y="8" width="2" height="2" fill="#c4c4c4"/></svg>
<div class="t" style="left:484px;top:179px;color:#d2d2d2;font-size:12px;letter-spacing:0.42px">Position</div>
<div class="t" style="left:698px;top:179px;color:#d2d2d2;font-size:12px;">X</div>
<div class="fld" style="left:709px;top:177px;width:92px;height:18px;background:#1b2930"></div>
<div class="a" style="left:712.5px;top:186.5px;width:11px;height:1px;background:#8a8a8a;"></div>
<div class="t" style="left:806px;top:179px;color:#d2d2d2;font-size:12px;">Y</div>
<div class="fld" style="left:817px;top:177px;width:92px;height:18px;background:#1b2930"></div>
<div class="a" style="left:820.5px;top:186.5px;width:11px;height:1px;background:#8a8a8a;"></div>
<div class="t" style="left:914px;top:179px;color:#d2d2d2;font-size:12px;">Z</div>
<div class="fld" style="left:925px;top:177px;width:92px;height:18px;background:#1b2930"></div>
<div class="a" style="left:928.5px;top:186.5px;width:11px;height:1px;background:#8a8a8a;"></div>
<div class="t" style="left:484px;top:201px;color:#d2d2d2;font-size:12px;letter-spacing:0.42px">Rotation</div>
<div class="t" style="left:698px;top:201px;color:#d2d2d2;font-size:12px;">X</div>
<div class="fld" style="left:709px;top:200px;width:92px;height:18px;background:#2a2a2a"></div>
<div class="a" style="left:712.5px;top:209.5px;width:11px;height:1px;background:#8a8a8a;"></div>
<div class="t" style="left:806px;top:201px;color:#d2d2d2;font-size:12px;">Y</div>
<div class="fld" style="left:817px;top:200px;width:92px;height:18px;background:#2a2a2a"></div>
<div class="a" style="left:820.5px;top:209.5px;width:11px;height:1px;background:#8a8a8a;"></div>
<div class="t" style="left:914px;top:201px;color:#d2d2d2;font-size:12px;">Z</div>
<div class="fld" style="left:925px;top:200px;width:92px;height:18px;background:#2a2a2a"></div>
<div class="a" style="left:928.5px;top:209.5px;width:11px;height:1px;background:#8a8a8a;"></div>
<div class="t" style="left:484px;top:221px;color:#d2d2d2;font-size:12px;letter-spacing:0.42px">Scale</div>
<div class="t" style="left:698px;top:221px;color:#d2d2d2;font-size:12px;">X</div>
<div class="fld" style="left:709px;top:220px;width:92px;height:18px;background:#2a2a2a"></div>
<div class="t" style="left:712px;top:221px;color:#d2d2d2;font-size:12px;">1</div>
<div class="t" style="left:806px;top:221px;color:#d2d2d2;font-size:12px;">Y</div>
<div class="fld" style="left:817px;top:220px;width:92px;height:18px;background:#2a2a2a"></div>
<div class="t" style="left:820px;top:221px;color:#d2d2d2;font-size:12px;">1</div>
<div class="t" style="left:914px;top:221px;color:#d2d2d2;font-size:12px;">Z</div>
<div class="fld" style="left:925px;top:220px;width:92px;height:18px;background:#2a2a2a"></div>
<div class="t" style="left:928px;top:221px;color:#d2d2d2;font-size:12px;">1</div>
<div class="a" style="left:465px;top:246px;width:557px;height:1px;background:#585858;"></div>
<div class="t" style="left:466px;top:247px;color:#d2d2d2;font-size:12px;letter-spacing:0.29px">Components that are only on some of the selected objects cannot be multi-edited.</div>
<div class="a" style="left:465px;top:262px;width:557px;height:1px;background:#1a1a1a;"></div>
<div class="btn" style="left:629px;top:272px;width:228px;height:22px;line-height:20px;letter-spacing:0.3px">Add Component</div>
<div class="a" style="left:1024px;top:73px;width:896px;height:592px;background:#484848;"></div>
<div class="a" style="left:1024px;top:73px;width:896px;height:18px;background:#282828;"></div>
<div class="a" style="left:1024px;top:91px;width:896px;height:1px;background:#323232;"></div>
<div class="a" style="left:1024px;top:73px;width:77px;height:19px;background:#3c3c3c;border-radius:0 3px 0 0"></div>
<div class="a" style="left:1024px;top:92px;width:896px;height:20px;background:#3c3c3c;"></div>
<div class="a" style="left:1024px;top:112px;width:896px;height:1px;background:#232323;"></div>
<svg style="left:1032px;top:78px;" width="11" height="10" viewBox="0 0 11 10"><path d="M3.2 0V10M7.6 0V10M0 3H11M0 7.2H11" stroke="#c4c4c4" stroke-width="1.3"/></svg>
<div class="t" style="left:1048px;top:76px;color:#d2d2d2;font-size:12px;letter-spacing:0.45px">Scene</div>
<svg style="left:1110.5px;top:77px;" width="11" height="11" viewBox="0 0 11 11"><path d="M0.5 3H10.5V10.5H0.5Z" fill="#c4c4c4"/><path d="M3 3.5V2A2.5 2 0 0 1 8 2V3.5" fill="none" stroke="#c4c4c4" stroke-width="1.2"/></svg>
<div class="t" style="left:1126px;top:76px;color:#c4c4c4;font-size:12px;letter-spacing:0.33px">Asset Store</div>
<svg style="left:1214px;top:79px;" width="14" height="8" viewBox="0 0 14 8"><rect x="0" y="0" width="14" height="7.4" rx="3.7" fill="#c4c4c4"/><circle cx="10.4" cy="3.7" r="1.2" fill="#282828"/><path d="M2.4 3.7H5.6M4 2.1V5.3" stroke="#282828" stroke-width="1"/></svg>
<div class="t" style="left:1232px;top:76px;color:#c4c4c4;font-size:12px;letter-spacing:0.4px">Game</div>
<svg style="left:1905px;top:77px;" width="2" height="10" viewBox="0 0 2 10"><rect x="0" y="0" width="2" height="2" fill="#c4c4c4"/><rect x="0" y="4" width="2" height="2" fill="#c4c4c4"/><rect x="0" y="8" width="2" height="2" fill="#c4c4c4"/></svg>
<div class="t" style="left:1028px;top:94.5px;color:#d2d2d2;font-size:12px;letter-spacing:0.45px">Shaded</div>
<svg style="left:1132.1px;top:99.9px;" width="7.8" height="4.2" viewBox="0 0 7.8 4.2"><path d="M0 0H7.8L3.9 4.2Z" fill="#c4c4c4"/></svg>
<div class="sep" style="left:1144px;top:92px;height:20px"></div>
<div class="sep" style="left:1150px;top:92px;height:20px"></div>
<div class="sep" style="left:1176px;top:92px;height:20px"></div>
<div class="sep" style="left:1182px;top:92px;height:20px"></div>
<div class="sep" style="left:1208px;top:92px;height:20px"></div>
<div class="sep" style="left:1234px;top:92px;height:20px"></div>
<div class="sep" style="left:1276px;top:92px;height:20px"></div>
<div class="sep" style="left:1310px;top:92px;height:20px"></div>
<div class="sep" style="left:1352px;top:92px;height:20px"></div>
<div class="sep" style="left:1576px;top:92px;height:20px"></div>
<div class="sep" style="left:1601px;top:92px;height:20px"></div>
<div class="sep" style="left:1636px;top:92px;height:20px"></div>
<div class="sep" style="left:1704px;top:92px;height:20px"></div>
<div class="t" style="left:1156.5px;top:94.5px;color:#d2d2d2;font-size:11px;letter-spacing:-0.6px">2D</div>
<svg style="left:1191px;top:96px;" width="9" height="12" viewBox="0 0 9 12"><circle cx="4.3" cy="4.3" r="4.3" fill="#c4c4c4"/><rect x="2.4" y="7.6" width="3.8" height="2.4" fill="#c4c4c4"/><rect x="2.8" y="10.4" width="3" height="1.2" rx="0.6" fill="#c4c4c4"/></svg>
<svg style="left:1214.5px;top:97px;" width="13" height="10" viewBox="0 0 13 10"><rect x="0" y="2.6" width="2.2" height="4.6" fill="#c4c4c4"/><path d="M3 2.6L7 0V9.6L3 7.2Z" fill="#c4c4c4"/><path d="M8.8 3A2.6 2.6 0 0 1 8.8 6.8M10.4 1A5 5 0 0 1 10.4 8.8" fill="none" stroke="#c4c4c4" stroke-width="1.1"/></svg>
<svg style="left:1240px;top:96px;" width="13" height="12" viewBox="0 0 13 12"><path d="M0.5 6.4L4.6 4.4L9 6.4L4.8 8.6Z M0.5 8.6L4.8 10.8L9.4 8.6" fill="#c4c4c4" stroke="#c4c4c4" stroke-width="0.8"/><path d="M9 0L10 2.8L12.8 3.8L10 4.8L9 7.6L8 4.8L5.2 3.8L8 2.8Z" fill="#c4c4c4"/></svg>
<div class="a" style="left:1259px;top:96px;width:1px;height:12px;background:#2c2c2c;"></div>
<svg style="left:1264.1px;top:100.0px;" width="7.8" height="4.4" viewBox="0 0 7.8 4.4"><path d="M0 0H7.8L3.9 4.4Z" fill="#c4c4c4"/></svg>
<svg style="left:1282px;top:96px;" width="14" height="12" viewBox="0 0 14 12"><path d="M0.6 6C3 1.6 10.6 1.6 13.4 6C10.6 10.4 3 10.4 0.6 6Z" fill="none" stroke="#a0a0a0" stroke-width="1.1"/><path d="M2 11.4L12 0.6" stroke="#a0a0a0" stroke-width="1.2"/></svg>
<div class="t" style="left:1298.5px;top:94px;color:#b4b4b4;font-size:12px;">0</div>
<svg style="left:1315.5px;top:96px;" width="14" height="13" viewBox="0 0 14 13"><path d="M2.5 0V11.5M6.5 0V11.5M10.5 0V5M0 2.5H13M0 6.5H8M0 10.5H7" stroke="#c4c4c4" stroke-width="1"/><path d="M7.4 6.6L10.2 9.8V12.6M13 6.6L10.2 9.8" fill="none" stroke="#e0e0e0" stroke-width="1.5"/></svg>
<div class="a" style="left:1335px;top:96px;width:1px;height:12px;background:#2c2c2c;"></div>
<svg style="left:1340.1px;top:100.0px;" width="7.8" height="4.4" viewBox="0 0 7.8 4.4"><path d="M0 0H7.8L3.9 4.4Z" fill="#c4c4c4"/></svg>
<svg style="left:1580.5px;top:95px;" width="14" height="14" viewBox="0 0 14 14"><path d="M5.4 5.4L12.4 12.4" stroke="#c4c4c4" stroke-width="2.4"/><circle cx="3.8" cy="3.8" r="2.2" fill="none" stroke="#c4c4c4" stroke-width="1.7"/><path d="M3.8 3.8L0.6 0.6" stroke="#3c3c3c" stroke-width="2"/><path d="M12.4 2.6L4.4 10.6" stroke="#c4c4c4" stroke-width="2.6"/><path d="M3 10L5 12L1.6 13.4Z" fill="#c4c4c4"/></svg>
<svg style="left:1607px;top:98px;" width="13" height="9" viewBox="0 0 13 9"><rect x="0" y="0.6" width="8" height="7.6" rx="1" fill="#c4c4c4"/><path d="M8.6 3.4L12.4 0.8V8L8.6 5.4Z" fill="#c4c4c4"/></svg>
<svg style="left:1623.6px;top:100.0px;" width="7.8" height="4.4" viewBox="0 0 7.8 4.4"><path d="M0 0H7.8L3.9 4.4Z" fill="#c4c4c4"/></svg>
<div class="a" style="left:1637px;top:92px;width:67px;height:20px;background:#4e4e4e;"></div>
<div class="t" style="left:1640px;top:95px;color:#d2d2d2;font-size:12px;letter-spacing:0.5px">Gizmos</div>
<div class="a" style="left:1687px;top:96px;width:1px;height:12px;background:#2e2e2e;"></div>
<svg style="left:1692.1px;top:100.0px;" width="7.8" height="4.4" viewBox="0 0 7.8 4.4"><path d="M0 0H7.8L3.9 4.4Z" fill="#c4c4c4"/></svg>
<div class="a" style="left:1712px;top:94px;width:205px;height:16px;background:#282828;border:1px solid #1f1f1f;border-radius:4px"></div>
<svg style="left:1717px;top:98px;" width="10" height="8" viewBox="0 0 10 8"><circle cx="3" cy="3" r="2.2" fill="none" stroke="#b0b0b0" stroke-width="1.2"/><path d="M4.6 4.6L7 7" stroke="#b0b0b0" stroke-width="1.3"/><path d="M7.2 2.2H10L8.6 3.8Z" fill="#b0b0b0"/></svg>
<div class="t" style="left:1731px;top:94px;color:#717171;font-size:12px;">All</div>
<svg style="left:1024px;top:113px" width="896" height="552" viewBox="1024 113 896 552"><defs><clipPath id="hc"><path d="M1440.0 122.8C1452.2 123.2 1464.3 125.0 1475.0 128.5C1485.7 131.9 1495.2 137.6 1504.0 143.5C1512.8 149.4 1520.7 156.0 1527.5 164.0C1534.3 172.0 1540.4 182.2 1545.0 191.7C1549.6 201.2 1553.0 212.6 1555.2 220.8C1557.4 229.0 1558.0 234.2 1558.2 241.0C1558.5 247.8 1558.4 254.1 1556.7 261.7C1555.0 269.3 1551.9 278.7 1548.0 286.5C1544.1 294.3 1539.4 300.8 1533.3 308.3C1527.2 315.8 1518.8 325.4 1511.5 331.7C1504.2 338.0 1498.1 341.2 1489.6 346.3C1481.1 351.4 1470.1 358.1 1460.4 362.3C1450.7 366.5 1441.0 370.1 1431.3 371.3C1421.6 372.5 1412.7 371.4 1402.0 369.6C1391.3 367.9 1375.2 364.9 1367.0 360.8C1358.8 356.7 1356.9 351.1 1352.5 344.8C1348.1 338.5 1344.3 331.5 1340.8 323.0C1337.3 314.5 1334.1 303.4 1331.4 293.8C1328.7 284.1 1326.0 273.8 1324.6 265.0C1323.2 256.2 1322.9 249.3 1323.0 241.0C1323.1 232.7 1324.0 223.2 1325.0 215.0C1326.0 206.8 1325.9 200.9 1329.0 191.7C1332.1 182.5 1336.9 168.6 1343.8 159.6C1350.6 150.6 1360.3 143.3 1370.0 137.7C1379.7 132.1 1390.3 128.3 1402.0 125.8C1413.7 123.3 1427.8 122.3 1440.0 122.8Z"/></clipPath><clipPath id="hc2"><path d="M1440.0 122.8C1452.2 123.2 1464.3 125.0 1475.0 128.5C1485.7 131.9 1495.2 137.6 1504.0 143.5C1512.8 149.4 1520.7 156.0 1527.5 164.0C1534.3 172.0 1540.4 182.2 1545.0 191.7C1549.6 201.2 1553.0 212.6 1555.2 220.8C1557.4 229.0 1558.0 234.2 1558.2 241.0C1558.5 247.8 1558.4 254.1 1556.7 261.7C1555.0 269.3 1551.9 278.7 1548.0 286.5C1544.1 294.3 1539.4 300.8 1533.3 308.3C1527.2 315.8 1518.8 325.4 1511.5 331.7C1504.2 338.0 1498.1 341.2 1489.6 346.3C1481.1 351.4 1470.1 358.1 1460.4 362.3C1450.7 366.5 1441.0 370.1 1431.3 371.3C1421.6 372.5 1412.7 371.4 1402.0 369.6C1391.3 367.9 1375.2 364.9 1367.0 360.8C1358.8 356.7 1356.9 351.1 1352.5 344.8C1348.1 338.5 1344.3 331.5 1340.8 323.0C1337.3 314.5 1334.1 303.4 1331.4 293.8C1328.7 284.1 1326.0 273.8 1324.6 265.0C1323.2 256.2 1322.9 249.3 1323.0 241.0C1323.1 232.7 1324.0 223.2 1325.0 215.0C1326.0 206.8 1325.9 200.9 1329.0 191.7C1332.1 182.5 1336.9 168.6 1343.8 159.6C1350.6 150.6 1360.3 143.3 1370.0 137.7C1379.7 132.1 1390.3 128.3 1402.0 125.8C1413.7 123.3 1427.8 122.3 1440.0 122.8Z" transform="translate(-8,-11)"/></clipPath><clipPath id="hc3"><path d="M1440.0 122.8C1452.2 123.2 1464.3 125.0 1475.0 128.5C1485.7 131.9 1495.2 137.6 1504.0 143.5C1512.8 149.4 1520.7 156.0 1527.5 164.0C1534.3 172.0 1540.4 182.2 1545.0 191.7C1549.6 201.2 1553.0 212.6 1555.2 220.8C1557.4 229.0 1558.0 234.2 1558.2 241.0C1558.5 247.8 1558.4 254.1 1556.7 261.7C1555.0 269.3 1551.9 278.7 1548.0 286.5C1544.1 294.3 1539.4 300.8 1533.3 308.3C1527.2 315.8 1518.8 325.4 1511.5 331.7C1504.2 338.0 1498.1 341.2 1489.6 346.3C1481.1 351.4 1470.1 358.1 1460.4 362.3C1450.7 366.5 1441.0 370.1 1431.3 371.3C1421.6 372.5 1412.7 371.4 1402.0 369.6C1391.3 367.9 1375.2 364.9 1367.0 360.8C1358.8 356.7 1356.9 351.1 1352.5 344.8C1348.1 338.5 1344.3 331.5 1340.8 323.0C1337.3 314.5 1334.1 303.4 1331.4 293.8C1328.7 284.1 1326.0 273.8 1324.6 265.0C1323.2 256.2 1322.9 249.3 1323.0 241.0C1323.1 232.7 1324.0 223.2 1325.0 215.0C1326.0 206.8 1325.9 200.9 1329.0 191.7C1332.1 182.5 1336.9 168.6 1343.8 159.6C1350.6 150.6 1360.3 143.3 1370.0 137.7C1379.7 132.1 1390.3 128.3 1402.0 125.8C1413.7 123.3 1427.8 122.3 1440.0 122.8Z" transform="translate(-9,-5)"/></clipPath></defs>
<path d="M1351.5 398.2L1352.0 432.2A15.5 15.5 0 1 0 1383.0 431.3L1381.5 397.3A15 15 0 0 0 1351.5 398.2Z" fill="#f2f2f4" stroke="#0b0b24" stroke-width="2.6" stroke-linejoin="round" />
<path d="M1352.3 436.5L1380 445.5L1380 454.0L1352.3 445.0Z" fill="#62b9b3" stroke="#0b0b24" stroke-width="2" stroke-linejoin="round"/>
<path d="M1359.3 439.8L1356.3 445.3" stroke="#1d5560" stroke-width="1.3"/>
<path d="M1364.9 441.6L1361.9 447.1" stroke="#1d5560" stroke-width="1.3"/>
<path d="M1370.4 443.4L1367.4 448.9" stroke="#1d5560" stroke-width="1.3"/>
<path d="M1376.0 445.2L1373.0 450.7" stroke="#1d5560" stroke-width="1.3"/>
<circle cx="1369.5" cy="379" r="20.5" fill="#f2f2f4" stroke="#0b0b24" stroke-width="2.6"/>
<circle cx="1377" cy="449" r="10" fill="#f2f2f4" stroke="#0b0b24" stroke-width="2.6"/>
<path d="M1350.2 450.9L1335.1 458.7A19.5 19.5 0 1 0 1357.5 490.1L1369.8 478.3A17 17 0 0 0 1350.2 450.9Z" fill="#f2f2f4" stroke="#0b0b24" stroke-width="2.6" stroke-linejoin="round" />
<circle cx="1331" cy="487" r="20" fill="#f2f2f4" stroke="#0b0b24" stroke-width="2.6"/>
<path d="M1382.5 646.7L1424.0 646.7A20.7 20.7 0 1 0 1417.7 606.3L1378.2 619.0A14.2 14.2 0 0 0 1382.5 646.7Z" fill="#f2f2f4" stroke="#0b0b24" stroke-width="5.2" stroke-linejoin="round"/>
<path d="M1383.9 568.8L1387.9 608.8A28.2 28.2 0 0 0 1444.1 603.2L1440.1 563.2A28.2 28.2 0 0 0 1383.9 568.8Z" fill="#f2f2f4" stroke="#0b0b24" stroke-width="5.2" stroke-linejoin="round"/>
<path d="M1382.5 646.7L1424.0 646.7A20.7 20.7 0 1 0 1417.7 606.3L1378.2 619.0A14.2 14.2 0 0 0 1382.5 646.7Z" fill="#f2f2f4"/>
<path d="M1383.9 568.8L1387.9 608.8A28.2 28.2 0 0 0 1444.1 603.2L1440.1 563.2A28.2 28.2 0 0 0 1383.9 568.8Z" fill="#f2f2f4"/>
<path d="M1420 541L1439 536L1439 546L1420 551Z" fill="#62b9b3" stroke="#0b0b24" stroke-width="2" stroke-linejoin="round"/>
<path d="M1425.3 541.5L1422.3 548.5" stroke="#1d5560" stroke-width="1.3"/>
<path d="M1429.1 540.5L1426.1 547.5" stroke="#1d5560" stroke-width="1.3"/>
<path d="M1432.9 539.5L1429.9 546.5" stroke="#1d5560" stroke-width="1.3"/>
<path d="M1436.7 538.5L1433.7 545.5" stroke="#1d5560" stroke-width="1.3"/>
<path d="M1386.7 466.2L1382.2 505.3A32.5 32.5 0 0 0 1446.7 513.5L1452.2 474.6A33 33 0 1 0 1386.7 466.2Z" fill="#f2f2f4" stroke="#0b0b24" stroke-width="2.6" stroke-linejoin="round" />
<circle cx="1399" cy="536.3" r="24.5" fill="#f2f2f4" stroke="#0b0b24" stroke-width="2.6"/>
<circle cx="1421.5" cy="610" r="13.5" fill="#f2f2f4" stroke="#0b0b24" stroke-width="2.6"/>
<path d="M1408 609.5L1392 608M1433 604L1443 596" stroke="#0b0b24" stroke-width="2.4" fill="none"/>
<path d="M1375 350L1375 428C1375 446 1382 454 1396 458L1440 468C1470 474 1500 474 1535 462L1550 345L1500 330Z" fill="#f2f2f4" stroke="#0b0b24" stroke-width="2.6" stroke-linejoin="round" />
<path d="M1380.5 368L1380.5 427C1380.5 444 1387 449 1399 453L1445 463" fill="none" stroke="#ffffff" stroke-width="8" stroke-linecap="butt"/>
<path d="M1375 350L1375 428C1375 446 1382 454 1396 458L1440 468C1470 474 1500 474 1535 462L1550 345L1500 330Z" fill="none" stroke="#0b0b24" stroke-width="2.6" stroke-linejoin="round"/>
<path d="M1389 456C1420 467 1450 472 1480 472L1480 465.5C1450 465.5 1420 460 1393 450Z" fill="#3f979a" stroke="#0b0b24" stroke-width="2.2" stroke-linejoin="round" />
<path d="M1416 369.5C1436 377 1456 371 1474 356" fill="none" stroke="#0b0b24" stroke-width="4.5"/><path d="M1426 373C1440 374.5 1452 370 1462 364" fill="none" stroke="#4fb3b0" stroke-width="1"/>
<path d="M1420.7 389L1403.5 419.5L1433.6 420.5Z" fill="none" stroke="#2aa3b0" stroke-width="3.2" stroke-linejoin="miter"/>
<path d="M1480.0 649.7L1520.0 649.7A20.2 20.2 0 1 0 1513.6 610.3L1475.7 623.0A13.7 13.7 0 0 0 1480.0 649.7Z" fill="#f2f2f4" stroke="#0b0b24" stroke-width="5.2" stroke-linejoin="round"/>
<path d="M1472.6 576.7L1482.1 614.7A27.7 27.7 0 0 0 1535.9 601.3L1526.4 563.3A27.7 27.7 0 0 0 1472.6 576.7Z" fill="#f2f2f4" stroke="#0b0b24" stroke-width="5.2" stroke-linejoin="round"/>
<path d="M1480.0 649.7L1520.0 649.7A20.2 20.2 0 1 0 1513.6 610.3L1475.7 623.0A13.7 13.7 0 0 0 1480.0 649.7Z" fill="#f2f2f4"/>
<path d="M1472.6 576.7L1482.1 614.7A27.7 27.7 0 0 0 1535.9 601.3L1526.4 563.3A27.7 27.7 0 0 0 1472.6 576.7Z" fill="#f2f2f4"/>
<path d="M1506 544L1526 539L1526 549L1506 554Z" fill="#62b9b3" stroke="#0b0b24" stroke-width="2" stroke-linejoin="round"/>
<path d="M1511.5 544.5L1508.5 551.5" stroke="#1d5560" stroke-width="1.3"/>
<path d="M1515.5 543.5L1512.5 550.5" stroke="#1d5560" stroke-width="1.3"/>
<path d="M1519.5 542.5L1516.5 549.5" stroke="#1d5560" stroke-width="1.3"/>
<path d="M1523.5 541.5L1520.5 548.5" stroke="#1d5560" stroke-width="1.3"/>
<path d="M1469.5 470C1469.5 450 1476 442.5 1495 443.5L1525 445C1538 446 1543 452 1541.5 465L1533 520C1530 540 1515 548 1497 546C1475 543 1464 535 1465.5 515Z" fill="#f2f2f4" stroke="#0b0b24" stroke-width="2.6" stroke-linejoin="round" />
<circle cx="1484.3" cy="542" r="24" fill="#f2f2f4" stroke="#0b0b24" stroke-width="2.6"/>
<circle cx="1517.1" cy="611.8" r="13.5" fill="#f2f2f4" stroke="#0b0b24" stroke-width="2.6"/>
<path d="M1503.6 611.5L1488 610M1528.5 605.5L1538 598" stroke="#0b0b24" stroke-width="2.4" fill="none"/>
<path d="M1534.6 450.4L1531.6 490.4A21.5 21.5 0 0 0 1574.4 493.6L1577.4 453.6A21.5 21.5 0 0 0 1534.6 450.4Z" fill="#f2f2f4" stroke="#0b0b24" stroke-width="2.6" stroke-linejoin="round" />
<circle cx="1552" cy="498.7" r="22" fill="#f2f2f4" stroke="#0b0b24" stroke-width="2.6"/>
<path d="M1524.9 385.7L1541.7 432.0A20.5 20.5 0 0 0 1580.8 419.6L1567.7 372.0A22.5 22.5 0 1 0 1524.9 385.7Z" fill="#f2f2f4" stroke="#0b0b24" stroke-width="2.6" stroke-linejoin="round" />
<path d="M1541 434.5L1562 441L1562 447L1541 440.5Z" fill="#62b9b3" stroke="#0b0b24" stroke-width="2" stroke-linejoin="round"/>
<path d="M1547.8 437.6L1544.8 440.6" stroke="#1d5560" stroke-width="1.3"/>
<path d="M1553.0 439.2L1550.0 442.2" stroke="#1d5560" stroke-width="1.3"/>
<path d="M1558.2 440.9L1555.2 443.9" stroke="#1d5560" stroke-width="1.3"/>
<circle cx="1544.6" cy="370.4" r="24.2" fill="#f2f2f4" stroke="#0b0b24" stroke-width="2.6"/>
<circle cx="1574.7" cy="432" r="15.6" fill="#f2f2f4" stroke="#0b0b24" stroke-width="2.6"/>
<g clip-path="url(#hc)">
<rect x="1300" y="110" width="280" height="280" fill="#dcdde0"/>
<g clip-path="url(#hc2)"><rect x="1300" y="100" width="280" height="290" fill="#ffffff"/>
<path d="M1440.0 122.8C1452.2 123.2 1464.3 125.0 1475.0 128.5C1485.7 131.9 1495.2 137.6 1504.0 143.5C1512.8 149.4 1520.7 156.0 1527.5 164.0C1534.3 172.0 1540.4 182.2 1545.0 191.7C1549.6 201.2 1553.0 212.6 1555.2 220.8C1557.4 229.0 1558.0 234.2 1558.2 241.0C1558.5 247.8 1558.4 254.1 1556.7 261.7C1555.0 269.3 1551.9 278.7 1548.0 286.5C1544.1 294.3 1539.4 300.8 1533.3 308.3C1527.2 315.8 1518.8 325.4 1511.5 331.7C1504.2 338.0 1498.1 341.2 1489.6 346.3C1481.1 351.4 1470.1 358.1 1460.4 362.3C1450.7 366.5 1441.0 370.1 1431.3 371.3C1421.6 372.5 1412.7 371.4 1402.0 369.6C1391.3 367.9 1375.2 364.9 1367.0 360.8C1358.8 356.7 1356.9 351.1 1352.5 344.8C1348.1 338.5 1344.3 331.5 1340.8 323.0C1337.3 314.5 1334.1 303.4 1331.4 293.8C1328.7 284.1 1326.0 273.8 1324.6 265.0C1323.2 256.2 1322.9 249.3 1323.0 241.0C1323.1 232.7 1324.0 223.2 1325.0 215.0C1326.0 206.8 1325.9 200.9 1329.0 191.7C1332.1 182.5 1336.9 168.6 1343.8 159.6C1350.6 150.6 1360.3 143.3 1370.0 137.7C1379.7 132.1 1390.3 128.3 1402.0 125.8C1413.7 123.3 1427.8 122.3 1440.0 122.8Z" transform="translate(1339,133) scale(0.985,1.0) translate(-1323,-122.8)" fill="#f3f3f5"/><circle cx="1420" cy="300" r="80" fill="#f3f3f5"/></g>
<path d="M1524 156C1508 164 1493 185 1487 212C1483 235 1484 265 1488 294C1490 312 1493 328 1496 345L1600 345L1600 150Z" fill="#1a98a5"/>
<g clip-path="url(#hc3)"><path d="M1524 156C1508 164 1493 185 1487 212C1483 235 1484 265 1488 294C1490 312 1493 328 1496 345L1600 345L1600 150Z" fill="#1fa5b1"/></g>
<path d="M1503 141L1523 157L1510 163L1495 146Z" fill="#dcdde0"/>
</g>
<ellipse cx="1520.7" cy="245.3" rx="17.5" ry="25" transform="rotate(12 1520.7 245.3)" fill="#f3f3f5"/>
<path d="M1522.1 235.2L1514 255.2L1528.8 250.6Z" fill="none" stroke="#1fa5b1" stroke-width="2.4"/>
<circle cx="1357.3" cy="250.9" r="10" fill="#1fa5b1"/><circle cx="1435.4" cy="253.7" r="10" fill="#1fa5b1"/>
<path d="M1440.0 122.8C1452.2 123.2 1464.3 125.0 1475.0 128.5C1485.7 131.9 1495.2 137.6 1504.0 143.5C1512.8 149.4 1520.7 156.0 1527.5 164.0C1534.3 172.0 1540.4 182.2 1545.0 191.7C1549.6 201.2 1553.0 212.6 1555.2 220.8C1557.4 229.0 1558.0 234.2 1558.2 241.0C1558.5 247.8 1558.4 254.1 1556.7 261.7C1555.0 269.3 1551.9 278.7 1548.0 286.5C1544.1 294.3 1539.4 300.8 1533.3 308.3C1527.2 315.8 1518.8 325.4 1511.5 331.7C1504.2 338.0 1498.1 341.2 1489.6 346.3C1481.1 351.4 1470.1 358.1 1460.4 362.3C1450.7 366.5 1441.0 370.1 1431.3 371.3C1421.6 372.5 1412.7 371.4 1402.0 369.6C1391.3 367.9 1375.2 364.9 1367.0 360.8C1358.8 356.7 1356.9 351.1 1352.5 344.8C1348.1 338.5 1344.3 331.5 1340.8 323.0C1337.3 314.5 1334.1 303.4 1331.4 293.8C1328.7 284.1 1326.0 273.8 1324.6 265.0C1323.2 256.2 1322.9 249.3 1323.0 241.0C1323.1 232.7 1324.0 223.2 1325.0 215.0C1326.0 206.8 1325.9 200.9 1329.0 191.7C1332.1 182.5 1336.9 168.6 1343.8 159.6C1350.6 150.6 1360.3 143.3 1370.0 137.7C1379.7 132.1 1390.3 128.3 1402.0 125.8C1413.7 123.3 1427.8 122.3 1440.0 122.8Z" fill="none" stroke="#0b0b24" stroke-width="3"/>
<circle cx="1338.1" cy="482" r="32.8" fill="none" stroke="#00bdc4" stroke-width="12.8"/>
<circle cx="1553.1" cy="488" r="32.8" fill="none" stroke="#00bdc4" stroke-width="12.8"/>
<circle cx="1418.8" cy="608.8" r="32.8" fill="none" stroke="#00bdc4" stroke-width="12.8"/>
<circle cx="1514" cy="611" r="32.8" fill="none" stroke="#00bdc4" stroke-width="12.8"/>
<path d="M1439.9 344.5L1361.0 350.5L1361.0 350.7L1440.1 348.5Z" fill="#ffffff" fill-opacity="1"/>
<path d="M1373.8 367.0L1376.2 448.7L1377.0 448.7L1379.3 367.0Z" fill="#ffffff" fill-opacity="1"/>
<path d="M1375.7 447.7L1337.9 481.8L1338.3 482.2L1377.5 449.7Z" fill="#ffffff" fill-opacity="1"/>
<path d="M1337.7 481.3L1315.9 493.6L1316.1 493.8L1338.5 482.7Z" fill="#ffffff" fill-opacity="1"/>
<path d="M1542.2 362.1L1568.8 439.2L1569.8 438.8L1547.0 360.5Z" fill="#ffffff" fill-opacity="1"/>
<path d="M1568.1 438.6L1552.8 487.9L1553.4 488.1L1570.5 439.4Z" fill="#ffffff" fill-opacity="1"/>
<path d="M1552.4 487.7L1542.9 509.7L1543.1 509.9L1553.8 488.3Z" fill="#ffffff" fill-opacity="1"/>
<path d="M1374.5 368.4L1444.8 467.1L1445.2 466.9L1378.7 365.6Z" fill="#ffffff" fill-opacity="0.95"/>
<path d="M1542.8 359.6L1444.8 466.8L1445.2 467.2L1546.4 363.0Z" fill="#ffffff" fill-opacity="1"/>
<path d="M1445.6 465.6L1417.4 455.0L1417.2 455.4L1444.4 468.4Z" fill="#ffffff" fill-opacity="1"/>
<path d="M1445.2 468.5L1499.1 459.7L1499.1 459.3L1444.8 465.5Z" fill="#ffffff" fill-opacity="1"/>
<path d="M1414.6 454.9L1408.3 543.0L1409.3 543.0L1420.0 455.5Z" fill="#ffffff" fill-opacity="1"/>
<path d="M1406.7 543.3L1417.6 608.9L1418.6 608.7L1410.9 542.7Z" fill="#ffffff" fill-opacity="1"/>
<path d="M1418.1 607.5L1379.2 609.0L1379.2 609.4L1418.1 610.1Z" fill="#ffffff" fill-opacity="1"/>
<path d="M1496.4 459.4L1494.4 546.4L1495.4 546.4L1501.8 459.6Z" fill="#ffffff" fill-opacity="1"/>
<path d="M1492.9 547.0L1513.5 611.1L1514.5 610.9L1496.9 545.8Z" fill="#ffffff" fill-opacity="1"/>
<path d="M1514.0 609.7L1474.2 612.2L1474.2 612.6L1514.0 612.3Z" fill="#ffffff" fill-opacity="1"/>
<path d="M1438.4 347L1441.6 347L1451 462A6 6 0 0 1 1439.2 466Z" fill="#ffffff" stroke="#ffe800" stroke-width="1.8" stroke-linejoin="round"/>
<rect x="1429.5" y="450.5" width="32" height="32" fill="none" stroke="#ffffff" stroke-width="1" stroke-opacity="0.85"/>
<circle cx="1445" cy="466.3" r="3.8" fill="#3a3a3a"/>
<rect x="1437.3" y="344" width="4.6" height="4" rx="0.8" fill="#e8d000" stroke="#2a2a2a" stroke-width="1.2"/>
<circle cx="1376.6" cy="366.7" r="2.6" fill="#18bcc4"/>
<circle cx="1544.7" cy="361.4" r="2.6" fill="#18bcc4"/>
<circle cx="1376.6" cy="448.7" r="2.6" fill="#18bcc4"/>
<circle cx="1569.3" cy="439" r="2.6" fill="#18bcc4"/>
<circle cx="1417.3" cy="455.2" r="2.6" fill="#18bcc4"/>
<circle cx="1499.1" cy="459.5" r="2.6" fill="#18bcc4"/>
<circle cx="1408.8" cy="543" r="2.6" fill="#18bcc4"/>
<circle cx="1494.9" cy="546.4" r="2.6" fill="#18bcc4"/>
<circle cx="1338.1" cy="482" r="1" fill="#333"/>
<circle cx="1553.1" cy="488" r="1" fill="#333"/>
<circle cx="1418.8" cy="608.8" r="1" fill="#333"/>
<circle cx="1514" cy="611" r="1" fill="#333"/><defs><linearGradient id="gg" x1="0" x2="1"><stop offset="0" stop-color="#9ae847"/><stop offset="1" stop-color="#62bf1e"/></linearGradient><linearGradient id="gw" x1="0" x2="0" y1="0" y2="1"><stop offset="0" stop-color="#f4f4f4"/><stop offset="1" stop-color="#a8a8a8"/></linearGradient><linearGradient id="gw2" x1="0" x2="1"><stop offset="0" stop-color="#f4f4f4"/><stop offset="1" stop-color="#b4b4b8"/></linearGradient><linearGradient id="gr" x1="0" x2="0" y1="0" y2="1"><stop offset="0" stop-color="#f04a22"/><stop offset="1" stop-color="#c8320e"/></linearGradient></defs><path d="M1863.5 137H1875.3L1869.4 155.6Z" fill="url(#gg)"/><path d="M1863.7 191H1875.1L1869.4 172Z" fill="url(#gw2)"/><path d="M1842 158V169.8L1860 164Z" fill="url(#gw)"/><path d="M1897.2 158V169.8L1878.8 164Z" fill="url(#gr)"/><rect x="1862.8" y="157.6" width="13.4" height="12.6" fill="#f0f0f0"/><text x="1864.2" y="131.5" font-family="Liberation Sans, sans-serif" font-size="12" fill="#ffffff">y</text><text x="1900" y="167" font-family="Liberation Sans, sans-serif" font-size="12" fill="#ffffff">x</text><rect x="1900" y="130.5" width="7" height="4.6" fill="#a4a4a4"/><path d="M1901.2 130.5V128.6A2.2 2.2 0 0 1 1905.6 128.4" fill="none" stroke="#a4a4a4" stroke-width="1.1"/><path d="M1847 210.6H1857M1847 213.7H1857M1847 216.8H1857" stroke="#c4c4c4" stroke-width="1"/><text x="1860.4" y="218" font-family="Liberation Sans, sans-serif" font-size="12" letter-spacing="0.4" fill="#c8c8c8">Back</text></svg>
<div class="a" style="left:0px;top:667px;width:1920px;height:351px;background:#383838;"></div>
<div class="a" style="left:0px;top:667px;width:1920px;height:19px;background:#282828;"></div>
<svg style="left:8px;top:671px;" width="10" height="11" viewBox="0 0 10 11"><rect x="0" y="0" width="10" height="11" rx="1" fill="#c4c4c4"/><path d="M1.6 2.6H8.4M1.6 5.4H8.4M1.6 8.2H6.4" stroke="#282828" stroke-width="1.1"/></svg>
<div class="t" style="left:23px;top:670px;color:#c4c4c4;font-size:12px;letter-spacing:0.245px;">Console</div>
<div class="a" style="left:88px;top:667px;width:96px;height:19px;background:#3c3c3c;border-radius:2px 2px 0 0"></div>
<div class="a" style="left:88px;top:667px;width:96px;height:2px;background:#3a79bb;border-radius:2px 2px 0 0"></div>
<svg style="left:95px;top:671px;" width="12" height="12" viewBox="0 0 12 12"><circle cx="6" cy="6" r="6" fill="#c4c4c4"/><path d="M6 2V6.4H9.6" fill="none" stroke="#3c3c3c" stroke-width="1.3"/></svg>
<div class="t" style="left:111.6px;top:670px;color:#d2d2d2;font-size:12px;letter-spacing:0.205px;">Animation</div>
<svg style="left:1885.5px;top:671.5px;" width="9" height="10" viewBox="0 0 9 10"><rect x="0.5" y="5.5" width="7.4" height="4" fill="none" stroke="#c4c4c4"/><path d="M2.2 5.5V3a2 2 0 0 1 4 0v0.6" fill="none" stroke="#c4c4c4"/></svg>
<svg style="left:1905px;top:672px;" width="2" height="10" viewBox="0 0 2 10"><rect x="0" y="0" width="2" height="2" fill="#c4c4c4"/><rect x="0" y="4" width="2" height="2" fill="#c4c4c4"/><rect x="0" y="8" width="2" height="2" fill="#c4c4c4"/></svg>
<div class="a" style="left:0px;top:686px;width:480px;height:20px;background:#3c3c3c;"></div>
<div class="a" style="left:0px;top:706px;width:480px;height:1px;background:#242424;"></div>
<div class="a" style="left:0px;top:686px;width:55px;height:20px;background:#505050;"></div>
<div class="t" style="left:4.4px;top:689px;color:#c4c4c4;font-size:12px;letter-spacing:0.387px;">Preview</div>
<div class="sep" style="left:55px;top:686px;height:20px"></div>
<div class="sep" style="left:81px;top:686px;height:20px"></div>
<div class="sep" style="left:107px;top:686px;height:20px"></div>
<div class="sep" style="left:133px;top:686px;height:20px"></div>
<div class="sep" style="left:159px;top:686px;height:20px"></div>
<div class="sep" style="left:185px;top:686px;height:20px"></div>
<div class="sep" style="left:211px;top:686px;height:20px"></div>
<svg style="left:61px;top:689px;" width="14" height="14" viewBox="0 0 14 14"><circle cx="7" cy="7" r="6.3" fill="none" stroke="#d2d2d2" stroke-width="1.1"/><circle cx="7" cy="7" r="4.2" fill="#f4693a"/></svg>
<svg style="left:87px;top:691px;" width="15" height="10" viewBox="0 0 15 10"><rect x="0" y="0" width="1.8" height="10" fill="#c4c4c4"/><path d="M8 0V10L2 5Z M14.4 0V10L8.2 5Z" fill="#c4c4c4"/></svg>
<svg style="left:114.5px;top:691px;" width="11" height="10" viewBox="0 0 11 10"><rect x="0" y="0" width="1.8" height="10" fill="#c4c4c4"/><path d="M10.8 0V10L2.4 5Z" fill="#c4c4c4"/></svg>
<svg style="left:141.5px;top:691px;" width="9" height="10" viewBox="0 0 9 10"><path d="M0 0V10L8.6 5Z" fill="#c4c4c4"/></svg>
<svg style="left:167px;top:691px;" width="11" height="10" viewBox="0 0 11 10"><rect x="9" y="0" width="1.8" height="10" fill="#c4c4c4"/><path d="M0 0V10L8.4 5Z" fill="#c4c4c4"/></svg>
<svg style="left:190.5px;top:691px;" width="15" height="10" viewBox="0 0 15 10"><rect x="12.8" y="0" width="1.8" height="10" fill="#c4c4c4"/><path d="M0 0V10L6.2 5Z M6.4 0V10L12.6 5Z" fill="#c4c4c4"/></svg>
<div class="fld" style="left:443px;top:688px;width:34px;height:16px"></div>
<div class="t" style="left:446px;top:688px;color:#d2d2d2;font-size:12px;letter-spacing:0.5px">60</div>
<div class="a" style="left:0px;top:707px;width:480px;height:20px;background:#3c3c3c;"></div>
<div class="a" style="left:0px;top:727px;width:480px;height:1px;background:#242424;"></div>
<div class="t" style="left:3.5px;top:709.5px;color:#d2d2d2;font-size:12px;letter-spacing:-0.116px;">Idle</div>
<svg style="left:192.3px;top:715.0px;" width="7.4" height="4.4" viewBox="0 0 7.4 4.4"><path d="M0 0H7.4L3.7 4.4Z" fill="#c4c4c4"/></svg>
<div class="sep" style="left:204px;top:707px;height:20px"></div>
<div class="sep" style="left:401px;top:707px;height:20px"></div>
<div class="sep" style="left:427px;top:707px;height:20px"></div>
<div class="sep" style="left:453px;top:707px;height:20px"></div>
<div class="t" style="left:311px;top:709.5px;color:#c4c4c4;font-size:12px;letter-spacing:0.42px">Samples</div>
<div class="fld" style="left:364px;top:709px;width:35px;height:16px"></div>
<div class="t" style="left:367.5px;top:709px;color:#d2d2d2;font-size:12px;letter-spacing:0.5px">60</div>
<svg style="left:408.5px;top:711px;" width="11" height="11" viewBox="0 0 11 11"><circle cx="5.5" cy="5.5" r="3.2" fill="none" stroke="#c4c4c4" stroke-width="1"/><path d="M5.5 0V3M5.5 8V11M0 5.5H3M8 5.5H11" stroke="#c4c4c4" stroke-width="1"/><circle cx="5.5" cy="5.5" r="0.9" fill="#c4c4c4"/></svg>
<svg style="left:432.5px;top:712px;" width="15" height="11" viewBox="0 0 15 11"><path d="M4.5 0L9 4.5L4.5 9L0 4.5Z" fill="#e4e4e4"/><path d="M11.6 5.4V10.4M9.2 7.9H14" stroke="#e4e4e4" stroke-width="1.1"/></svg>
<svg style="left:461.5px;top:711px;" width="12" height="12" viewBox="0 0 12 12"><path d="M0.5 0H4.6V8.4L2.6 10.8L0.5 8.4Z" fill="#e4e4e4"/><path d="M8.8 6V11M6.4 8.5H11.2" stroke="#e4e4e4" stroke-width="1.1"/></svg>
<div class="a" style="left:0px;top:746px;width:480px;height:108px;background:#4d4d4d;"></div>
<svg style="left:18.8px;top:749.8px;" width="8" height="10" viewBox="0 0 8 10"><path d="M0 0V10L8 5.0Z" fill="#7a7a7a"/></svg>
<svg style="left:30.6px;top:748.5px;" width="11" height="10" viewBox="0 0 11 10"><path d="M5.5 0.8V5.4" stroke="#9bd63c" stroke-width="1.7" stroke-linecap="round"/><path d="M5.5 5.4L1.2 8.2" stroke="#4fb8f0" stroke-width="1.7" stroke-linecap="round"/><path d="M5.5 5.4L9.8 8.2" stroke="#ee6a3a" stroke-width="1.7" stroke-linecap="round"/></svg>
<div class="t" style="left:44px;top:746px;color:#bdbdbd;font-size:12px;letter-spacing:0.12px">Hips bone : Position</div>
<svg style="left:460.5px;top:750.5px;" width="8" height="8" viewBox="0 0 8 8"><path d="M4 0.6L7.4 4L4 7.4L0.6 4Z" fill="#333" stroke="#c4c4c4" stroke-width="1"/></svg>
<svg style="left:46.8px;top:767.8px;" width="8" height="10" viewBox="0 0 8 10"><path d="M0 0V10L8 5.0Z" fill="#7a7a7a"/></svg>
<svg style="left:58.6px;top:766.5px;" width="11" height="10" viewBox="0 0 11 10"><path d="M5.5 0.8V5.4" stroke="#9bd63c" stroke-width="1.7" stroke-linecap="round"/><path d="M5.5 5.4L1.2 8.2" stroke="#4fb8f0" stroke-width="1.7" stroke-linecap="round"/><path d="M5.5 5.4L9.8 8.2" stroke="#ee6a3a" stroke-width="1.7" stroke-linecap="round"/></svg>
<div class="t" style="left:72px;top:764px;color:#bdbdbd;font-size:12px;letter-spacing:0.12px">Head : Position</div>
<svg style="left:460.5px;top:768.5px;" width="8" height="8" viewBox="0 0 8 8"><path d="M4 0.6L7.4 4L4 7.4L0.6 4Z" fill="#333" stroke="#c4c4c4" stroke-width="1"/></svg>
<svg style="left:18.8px;top:785.8px;" width="8" height="10" viewBox="0 0 8 10"><path d="M0 0V10L8 5.0Z" fill="#7a7a7a"/></svg>
<svg style="left:30.6px;top:784.5px;" width="11" height="10" viewBox="0 0 11 10"><path d="M5.5 0.8V5.4" stroke="#9bd63c" stroke-width="1.7" stroke-linecap="round"/><path d="M5.5 5.4L1.2 8.2" stroke="#4fb8f0" stroke-width="1.7" stroke-linecap="round"/><path d="M5.5 5.4L9.8 8.2" stroke="#ee6a3a" stroke-width="1.7" stroke-linecap="round"/></svg>
<div class="t" style="left:44px;top:782px;color:#bdbdbd;font-size:12px;letter-spacing:0.12px">L Arm Ik : Position</div>
<svg style="left:460.5px;top:786.5px;" width="8" height="8" viewBox="0 0 8 8"><path d="M4 0.6L7.4 4L4 7.4L0.6 4Z" fill="#333" stroke="#c4c4c4" stroke-width="1"/></svg>
<svg style="left:18.8px;top:803.8px;" width="8" height="10" viewBox="0 0 8 10"><path d="M0 0V10L8 5.0Z" fill="#7a7a7a"/></svg>
<svg style="left:30.6px;top:802.5px;" width="11" height="10" viewBox="0 0 11 10"><path d="M5.5 0.8V5.4" stroke="#9bd63c" stroke-width="1.7" stroke-linecap="round"/><path d="M5.5 5.4L1.2 8.2" stroke="#4fb8f0" stroke-width="1.7" stroke-linecap="round"/><path d="M5.5 5.4L9.8 8.2" stroke="#ee6a3a" stroke-width="1.7" stroke-linecap="round"/></svg>
<div class="t" style="left:44px;top:800px;color:#bdbdbd;font-size:12px;letter-spacing:0.12px">L Foot Ik : Position</div>
<svg style="left:460.5px;top:804.5px;" width="8" height="8" viewBox="0 0 8 8"><path d="M4 0.6L7.4 4L4 7.4L0.6 4Z" fill="#333" stroke="#c4c4c4" stroke-width="1"/></svg>
<svg style="left:18.8px;top:821.8px;" width="8" height="10" viewBox="0 0 8 10"><path d="M0 0V10L8 5.0Z" fill="#7a7a7a"/></svg>
<svg style="left:30.6px;top:820.5px;" width="11" height="10" viewBox="0 0 11 10"><path d="M5.5 0.8V5.4" stroke="#9bd63c" stroke-width="1.7" stroke-linecap="round"/><path d="M5.5 5.4L1.2 8.2" stroke="#4fb8f0" stroke-width="1.7" stroke-linecap="round"/><path d="M5.5 5.4L9.8 8.2" stroke="#ee6a3a" stroke-width="1.7" stroke-linecap="round"/></svg>
<div class="t" style="left:44px;top:818px;color:#bdbdbd;font-size:12px;letter-spacing:0.12px">R Arm Ik : Position</div>
<svg style="left:460.5px;top:822.5px;" width="8" height="8" viewBox="0 0 8 8"><path d="M4 0.6L7.4 4L4 7.4L0.6 4Z" fill="#333" stroke="#c4c4c4" stroke-width="1"/></svg>
<svg style="left:18.8px;top:839.8px;" width="8" height="10" viewBox="0 0 8 10"><path d="M0 0V10L8 5.0Z" fill="#7a7a7a"/></svg>
<svg style="left:30.6px;top:838.5px;" width="11" height="10" viewBox="0 0 11 10"><path d="M5.5 0.8V5.4" stroke="#9bd63c" stroke-width="1.7" stroke-linecap="round"/><path d="M5.5 5.4L1.2 8.2" stroke="#4fb8f0" stroke-width="1.7" stroke-linecap="round"/><path d="M5.5 5.4L9.8 8.2" stroke="#ee6a3a" stroke-width="1.7" stroke-linecap="round"/></svg>
<div class="t" style="left:44px;top:836px;color:#bdbdbd;font-size:12px;letter-spacing:0.12px">R Foot Ik : Position</div>
<svg style="left:460.5px;top:840.5px;" width="8" height="8" viewBox="0 0 8 8"><path d="M4 0.6L7.4 4L4 7.4L0.6 4Z" fill="#333" stroke="#c4c4c4" stroke-width="1"/></svg>
<div class="btn" style="left:126px;top:865px;width:228px;height:19px;line-height:17px;letter-spacing:0.3px">Add Property</div>
<div class="a" style="left:0px;top:997px;width:480px;height:1px;background:#242424;"></div>
<div class="a" style="left:0px;top:998px;width:480px;height:20px;background:#3c3c3c;"></div>
<div class="a" style="left:320px;top:998px;width:79px;height:20px;background:#4f4f4f;"></div>
<div class="a" style="left:319px;top:998px;width:1px;height:20px;background:#242424;"></div>
<div class="a" style="left:399px;top:998px;width:1px;height:20px;background:#242424;"></div>
<div class="t" style="left:320px;top:1001px;color:#d2d2d2;font-size:12px;width:79px;text-align:center;letter-spacing:0.3px">Dopesheet</div>
<div class="t" style="left:400px;top:1001px;color:#d2d2d2;font-size:12px;width:80px;text-align:center;letter-spacing:0.3px">Curves</div>
<div class="a" style="left:480px;top:686px;width:1px;height:332px;background:#1e1e1e;"></div>
<svg style="left:0;top:0" width="1920" height="1040" viewBox="0 0 1920 1040"><rect x="481" y="686" width="1426" height="20" fill="#2b3e4b"/><rect x="481" y="686" width="38.5" height="20" fill="#2b3035"/><rect x="1866" y="686" width="41" height="20" fill="#2f383e"/><rect x="1860" y="686" width="8" height="20" fill="#55646e"/><rect x="481" y="706" width="1426" height="22" fill="#323232"/><rect x="481" y="706" width="1426" height="1" fill="#1f1f1f"/><rect x="481" y="725" width="1426" height="3" fill="#2d2d2d"/><rect x="481" y="728" width="1426" height="18" fill="#343434"/><rect x="481" y="746" width="1426" height="259" fill="#373737"/><rect x="481.5" y="746.5" width="1424" height="15" fill="#3b3b3b" stroke="#474747" stroke-width="1"/><rect x="481.5" y="764.5" width="1424" height="15" fill="#3b3b3b" stroke="#474747" stroke-width="1"/><rect x="481.5" y="782.5" width="1424" height="15" fill="#3b3b3b" stroke="#474747" stroke-width="1"/><rect x="481.5" y="800.5" width="1424" height="15" fill="#3b3b3b" stroke="#474747" stroke-width="1"/><rect x="481.5" y="818.5" width="1424" height="15" fill="#3b3b3b" stroke="#474747" stroke-width="1"/><rect x="481.5" y="836.5" width="1424" height="15" fill="#3b3b3b" stroke="#474747" stroke-width="1"/><rect x="519.0" y="746" width="1" height="259" fill="#4d4d4d"/><rect x="519.0" y="694" width="1.2" height="12" fill="#bcc4c8"/><text x="523.0" y="699.8" font-family="Liberation Sans, sans-serif" font-size="10" fill="#a3adb3">0</text><rect x="542.0" y="746" width="1" height="259" fill="#424242"/><rect x="542.0" y="701" width="1.2" height="5" fill="#a0aab0"/><rect x="564.5" y="746" width="1" height="259" fill="#424242"/><rect x="564.5" y="701" width="1.2" height="5" fill="#a0aab0"/><rect x="586.9" y="746" width="1" height="259" fill="#424242"/><rect x="586.9" y="701" width="1.2" height="5" fill="#a0aab0"/><rect x="609.4" y="746" width="1" height="259" fill="#424242"/><rect x="609.4" y="701" width="1.2" height="5" fill="#a0aab0"/><rect x="631.8" y="746" width="1" height="259" fill="#4d4d4d"/><rect x="631.8" y="694" width="1.2" height="12" fill="#bcc4c8"/><text x="635.8" y="699.8" font-family="Liberation Sans, sans-serif" font-size="10" fill="#a3adb3">5</text><rect x="654.2" y="746" width="1" height="259" fill="#424242"/><rect x="654.2" y="701" width="1.2" height="5" fill="#a0aab0"/><rect x="676.7" y="746" width="1" height="259" fill="#424242"/><rect x="676.7" y="701" width="1.2" height="5" fill="#a0aab0"/><rect x="699.1" y="746" width="1" height="259" fill="#424242"/><rect x="699.1" y="701" width="1.2" height="5" fill="#a0aab0"/><rect x="721.6" y="746" width="1" height="259" fill="#424242"/><rect x="721.6" y="701" width="1.2" height="5" fill="#a0aab0"/><rect x="744.0" y="746" width="1" height="259" fill="#4d4d4d"/><rect x="744.0" y="694" width="1.2" height="12" fill="#bcc4c8"/><text x="748.0" y="699.8" font-family="Liberation Sans, sans-serif" font-size="10" fill="#a3adb3">10</text><rect x="766.4" y="746" width="1" height="259" fill="#424242"/><rect x="766.4" y="701" width="1.2" height="5" fill="#a0aab0"/><rect x="788.9" y="746" width="1" height="259" fill="#424242"/><rect x="788.9" y="701" width="1.2" height="5" fill="#a0aab0"/><rect x="811.3" y="746" width="1" height="259" fill="#424242"/><rect x="811.3" y="701" width="1.2" height="5" fill="#a0aab0"/><rect x="833.8" y="746" width="1" height="259" fill="#424242"/><rect x="833.8" y="701" width="1.2" height="5" fill="#a0aab0"/><rect x="856.2" y="746" width="1" height="259" fill="#4d4d4d"/><rect x="856.2" y="694" width="1.2" height="12" fill="#bcc4c8"/><text x="860.2" y="699.8" font-family="Liberation Sans, sans-serif" font-size="10" fill="#a3adb3">15</text><rect x="878.6" y="746" width="1" height="259" fill="#424242"/><rect x="878.6" y="701" width="1.2" height="5" fill="#a0aab0"/><rect x="901.1" y="746" width="1" height="259" fill="#424242"/><rect x="901.1" y="701" width="1.2" height="5" fill="#a0aab0"/><rect x="923.5" y="746" width="1" height="259" fill="#424242"/><rect x="923.5" y="701" width="1.2" height="5" fill="#a0aab0"/><rect x="946.0" y="746" width="1" height="259" fill="#424242"/><rect x="946.0" y="701" width="1.2" height="5" fill="#a0aab0"/><rect x="968.4" y="746" width="1" height="259" fill="#4d4d4d"/><rect x="968.4" y="694" width="1.2" height="12" fill="#bcc4c8"/><text x="972.4" y="699.8" font-family="Liberation Sans, sans-serif" font-size="10" fill="#a3adb3">20</text><rect x="990.8" y="746" width="1" height="259" fill="#424242"/><rect x="990.8" y="701" width="1.2" height="5" fill="#a0aab0"/><rect x="1013.3" y="746" width="1" height="259" fill="#424242"/><rect x="1013.3" y="701" width="1.2" height="5" fill="#a0aab0"/><rect x="1035.7" y="746" width="1" height="259" fill="#424242"/><rect x="1035.7" y="701" width="1.2" height="5" fill="#a0aab0"/><rect x="1058.2" y="746" width="1" height="259" fill="#424242"/><rect x="1058.2" y="701" width="1.2" height="5" fill="#a0aab0"/><rect x="1080.6" y="746" width="1" height="259" fill="#4d4d4d"/><rect x="1080.6" y="694" width="1.2" height="12" fill="#bcc4c8"/><text x="1084.6" y="699.8" font-family="Liberation Sans, sans-serif" font-size="10" fill="#a3adb3">25</text><rect x="1103.0" y="746" width="1" height="259" fill="#424242"/><rect x="1103.0" y="701" width="1.2" height="5" fill="#a0aab0"/><rect x="1125.5" y="746" width="1" height="259" fill="#424242"/><rect x="1125.5" y="701" width="1.2" height="5" fill="#a0aab0"/><rect x="1147.9" y="746" width="1" height="259" fill="#424242"/><rect x="1147.9" y="701" width="1.2" height="5" fill="#a0aab0"/><rect x="1170.4" y="746" width="1" height="259" fill="#424242"/><rect x="1170.4" y="701" width="1.2" height="5" fill="#a0aab0"/><rect x="1192.8" y="746" width="1" height="259" fill="#4d4d4d"/><rect x="1192.8" y="694" width="1.2" height="12" fill="#bcc4c8"/><text x="1196.8" y="699.8" font-family="Liberation Sans, sans-serif" font-size="10" fill="#a3adb3">30</text><rect x="1215.2" y="746" width="1" height="259" fill="#424242"/><rect x="1215.2" y="701" width="1.2" height="5" fill="#a0aab0"/><rect x="1237.7" y="746" width="1" height="259" fill="#424242"/><rect x="1237.7" y="701" width="1.2" height="5" fill="#a0aab0"/><rect x="1260.1" y="746" width="1" height="259" fill="#424242"/><rect x="1260.1" y="701" width="1.2" height="5" fill="#a0aab0"/><rect x="1282.6" y="746" width="1" height="259" fill="#424242"/><rect x="1282.6" y="701" width="1.2" height="5" fill="#a0aab0"/><rect x="1305.0" y="746" width="1" height="259" fill="#4d4d4d"/><rect x="1305.0" y="694" width="1.2" height="12" fill="#bcc4c8"/><text x="1309.0" y="699.8" font-family="Liberation Sans, sans-serif" font-size="10" fill="#a3adb3">35</text><rect x="1327.4" y="746" width="1" height="259" fill="#424242"/><rect x="1327.4" y="701" width="1.2" height="5" fill="#a0aab0"/><rect x="1349.9" y="746" width="1" height="259" fill="#424242"/><rect x="1349.9" y="701" width="1.2" height="5" fill="#a0aab0"/><rect x="1372.3" y="746" width="1" height="259" fill="#424242"/><rect x="1372.3" y="701" width="1.2" height="5" fill="#a0aab0"/><rect x="1394.8" y="746" width="1" height="259" fill="#424242"/><rect x="1394.8" y="701" width="1.2" height="5" fill="#a0aab0"/><rect x="1417.2" y="746" width="1" height="259" fill="#4d4d4d"/><rect x="1417.2" y="694" width="1.2" height="12" fill="#bcc4c8"/><text x="1421.2" y="699.8" font-family="Liberation Sans, sans-serif" font-size="10" fill="#a3adb3">40</text><rect x="1439.6" y="746" width="1" height="259" fill="#424242"/><rect x="1439.6" y="701" width="1.2" height="5" fill="#a0aab0"/><rect x="1462.1" y="746" width="1" height="259" fill="#424242"/><rect x="1462.1" y="701" width="1.2" height="5" fill="#a0aab0"/><rect x="1484.5" y="746" width="1" height="259" fill="#424242"/><rect x="1484.5" y="701" width="1.2" height="5" fill="#a0aab0"/><rect x="1507.0" y="746" width="1" height="259" fill="#424242"/><rect x="1507.0" y="701" width="1.2" height="5" fill="#a0aab0"/><rect x="1529.4" y="746" width="1" height="259" fill="#4d4d4d"/><rect x="1529.4" y="694" width="1.2" height="12" fill="#bcc4c8"/><text x="1533.4" y="699.8" font-family="Liberation Sans, sans-serif" font-size="10" fill="#a3adb3">45</text><rect x="1551.8" y="746" width="1" height="259" fill="#424242"/><rect x="1551.8" y="701" width="1.2" height="5" fill="#a0aab0"/><rect x="1574.3" y="746" width="1" height="259" fill="#424242"/><rect x="1574.3" y="701" width="1.2" height="5" fill="#a0aab0"/><rect x="1596.7" y="746" width="1" height="259" fill="#424242"/><rect x="1596.7" y="701" width="1.2" height="5" fill="#a0aab0"/><rect x="1619.2" y="746" width="1" height="259" fill="#424242"/><rect x="1619.2" y="701" width="1.2" height="5" fill="#a0aab0"/><rect x="1641.6" y="746" width="1" height="259" fill="#4d4d4d"/><rect x="1641.6" y="694" width="1.2" height="12" fill="#bcc4c8"/><text x="1645.6" y="699.8" font-family="Liberation Sans, sans-serif" font-size="10" fill="#a3adb3">50</text><rect x="1664.0" y="746" width="1" height="259" fill="#424242"/><rect x="1664.0" y="701" width="1.2" height="5" fill="#a0aab0"/><rect x="1686.5" y="746" width="1" height="259" fill="#424242"/><rect x="1686.5" y="701" width="1.2" height="5" fill="#a0aab0"/><rect x="1708.9" y="746" width="1" height="259" fill="#424242"/><rect x="1708.9" y="701" width="1.2" height="5" fill="#a0aab0"/><rect x="1731.4" y="746" width="1" height="259" fill="#424242"/><rect x="1731.4" y="701" width="1.2" height="5" fill="#a0aab0"/><rect x="1753.8" y="746" width="1" height="259" fill="#4d4d4d"/><rect x="1753.8" y="694" width="1.2" height="12" fill="#bcc4c8"/><text x="1757.8" y="699.8" font-family="Liberation Sans, sans-serif" font-size="10" fill="#a3adb3">55</text><rect x="1776.2" y="746" width="1" height="259" fill="#424242"/><rect x="1776.2" y="701" width="1.2" height="5" fill="#a0aab0"/><rect x="1798.7" y="746" width="1" height="259" fill="#424242"/><rect x="1798.7" y="701" width="1.2" height="5" fill="#a0aab0"/><rect x="1821.1" y="746" width="1" height="259" fill="#424242"/><rect x="1821.1" y="701" width="1.2" height="5" fill="#a0aab0"/><rect x="1843.6" y="746" width="1" height="259" fill="#424242"/><rect x="1843.6" y="701" width="1.2" height="5" fill="#a0aab0"/><rect x="1866.0" y="746" width="1" height="259" fill="#4d4d4d"/><rect x="1866.0" y="694" width="1.2" height="12" fill="#bcc4c8"/><rect x="1888.4" y="746" width="1" height="259" fill="#424242"/><rect x="1888.4" y="701" width="1" height="5" fill="#5d666b"/><text x="1870.5" y="699.8" font-family="Liberation Sans, sans-serif" font-size="10" fill="#5f6b72">60</text><path d="M519.5 731.9L524.6 737L519.5 742.1L514.4 737Z" fill="#8a8a8a" stroke="#2a2a2a" stroke-width="0.6"/><path d="M1866.4 731.9L1871.5 737L1866.4 742.1L1861.3000000000002 737Z" fill="#5a96ea" stroke="#274a7a" stroke-width="0.6"/><path d="M519.5 749.4L524.6 754.5L519.5 759.6L514.4 754.5Z" fill="#c4c4c4" stroke="#2a2a2a" stroke-width="0.6"/><path d="M1866.4 749.4L1871.5 754.5L1866.4 759.6L1861.3000000000002 754.5Z" fill="#5a96ea" stroke="#274a7a" stroke-width="0.6"/><path d="M519.5 767.4L524.6 772.5L519.5 777.6L514.4 772.5Z" fill="#c4c4c4" stroke="#2a2a2a" stroke-width="0.6"/><path d="M1866.4 767.4L1871.5 772.5L1866.4 777.6L1861.3000000000002 772.5Z" fill="#5a96ea" stroke="#274a7a" stroke-width="0.6"/><path d="M519.5 785.4L524.6 790.5L519.5 795.6L514.4 790.5Z" fill="#c4c4c4" stroke="#2a2a2a" stroke-width="0.6"/><path d="M1866.4 785.4L1871.5 790.5L1866.4 795.6L1861.3000000000002 790.5Z" fill="#5a96ea" stroke="#274a7a" stroke-width="0.6"/><path d="M519.5 803.4L524.6 808.5L519.5 813.6L514.4 808.5Z" fill="#c4c4c4" stroke="#2a2a2a" stroke-width="0.6"/><path d="M1866.4 803.4L1871.5 808.5L1866.4 813.6L1861.3000000000002 808.5Z" fill="#5a96ea" stroke="#274a7a" stroke-width="0.6"/><path d="M519.5 821.4L524.6 826.5L519.5 831.6L514.4 826.5Z" fill="#c4c4c4" stroke="#2a2a2a" stroke-width="0.6"/><path d="M1866.4 821.4L1871.5 826.5L1866.4 831.6L1861.3000000000002 826.5Z" fill="#5a96ea" stroke="#274a7a" stroke-width="0.6"/><path d="M519.5 839.4L524.6 844.5L519.5 849.6L514.4 844.5Z" fill="#c4c4c4" stroke="#2a2a2a" stroke-width="0.6"/><path d="M1866.4 839.4L1871.5 844.5L1866.4 849.6L1861.3000000000002 844.5Z" fill="#5a96ea" stroke="#274a7a" stroke-width="0.6"/><path d="M1193.0000000000002 731.9L1198.1000000000001 737L1193.0000000000002 742.1L1187.9000000000003 737Z" fill="#8a8a8a" stroke="#2a2a2a" stroke-width="0.6"/><path d="M1193.0000000000002 749.4L1198.1000000000001 754.5L1193.0000000000002 759.6L1187.9000000000003 754.5Z" fill="#c4c4c4" stroke="#2a2a2a" stroke-width="0.6"/><path d="M1193.0000000000002 767.4L1198.1000000000001 772.5L1193.0000000000002 777.6L1187.9000000000003 772.5Z" fill="#c4c4c4" stroke="#2a2a2a" stroke-width="0.6"/><path d="M1193.0000000000002 785.4L1198.1000000000001 790.5L1193.0000000000002 795.6L1187.9000000000003 790.5Z" fill="#c4c4c4" stroke="#2a2a2a" stroke-width="0.6"/><path d="M1193.0000000000002 821.4L1198.1000000000001 826.5L1193.0000000000002 831.6L1187.9000000000003 826.5Z" fill="#c4c4c4" stroke="#2a2a2a" stroke-width="0.6"/><rect x="1865" y="686" width="1.3" height="319" fill="#f0f0f0"/></svg>
<svg style="left:1911px;top:691px;" width="2" height="10" viewBox="0 0 2 10"><rect x="0" y="0" width="2" height="2" fill="#c4c4c4"/><rect x="0" y="4" width="2" height="2" fill="#c4c4c4"/><rect x="0" y="8" width="2" height="2" fill="#c4c4c4"/></svg>
<div class="a" style="left:1907px;top:706px;width:13px;height:312px;background:#383838;"></div>
<svg style="left:1909.5px;top:994.5px;" width="8" height="5" viewBox="0 0 8 5"><path d="M0 0H8L4.0 5Z" fill="#d0d0d0"/></svg>
<svg style="left:1909.5px;top:733px;" width="8" height="5" viewBox="0 0 8 5"><path d="M0 5H8L4 0Z" fill="#d0d0d0"/></svg>
<div class="a" style="left:1909px;top:743px;width:10px;height:246px;background:#5f5f5f;border-radius:5px"></div>
<div class="a" style="left:481px;top:1005px;width:1426px;height:13px;background:#383838;"></div>
<svg style="left:486px;top:1007.5px;" width="5" height="8" viewBox="0 0 5 8"><path d="M5 0V8L0 4Z" fill="#d0d0d0"/></svg>
<svg style="left:1898px;top:1007.5px;" width="5" height="8" viewBox="0 0 5 8"><path d="M0 0V8L5 4Z" fill="#d0d0d0"/></svg>
<div class="a" style="left:498px;top:1007px;width:1394px;height:10px;background:#686868;border-radius:5px"></div>
<div class="a" style="left:498px;top:1007px;width:12px;height:10px;background:#7c7c7c;border-radius:5px 0 0 5px"></div>
<div class="a" style="left:1879px;top:1007px;width:13px;height:10px;background:#7c7c7c;border-radius:0 5px 5px 0"></div>
<div class="a" style="left:0px;top:1018px;width:1920px;height:22px;background:#191919;"></div>
</div></body></html>
